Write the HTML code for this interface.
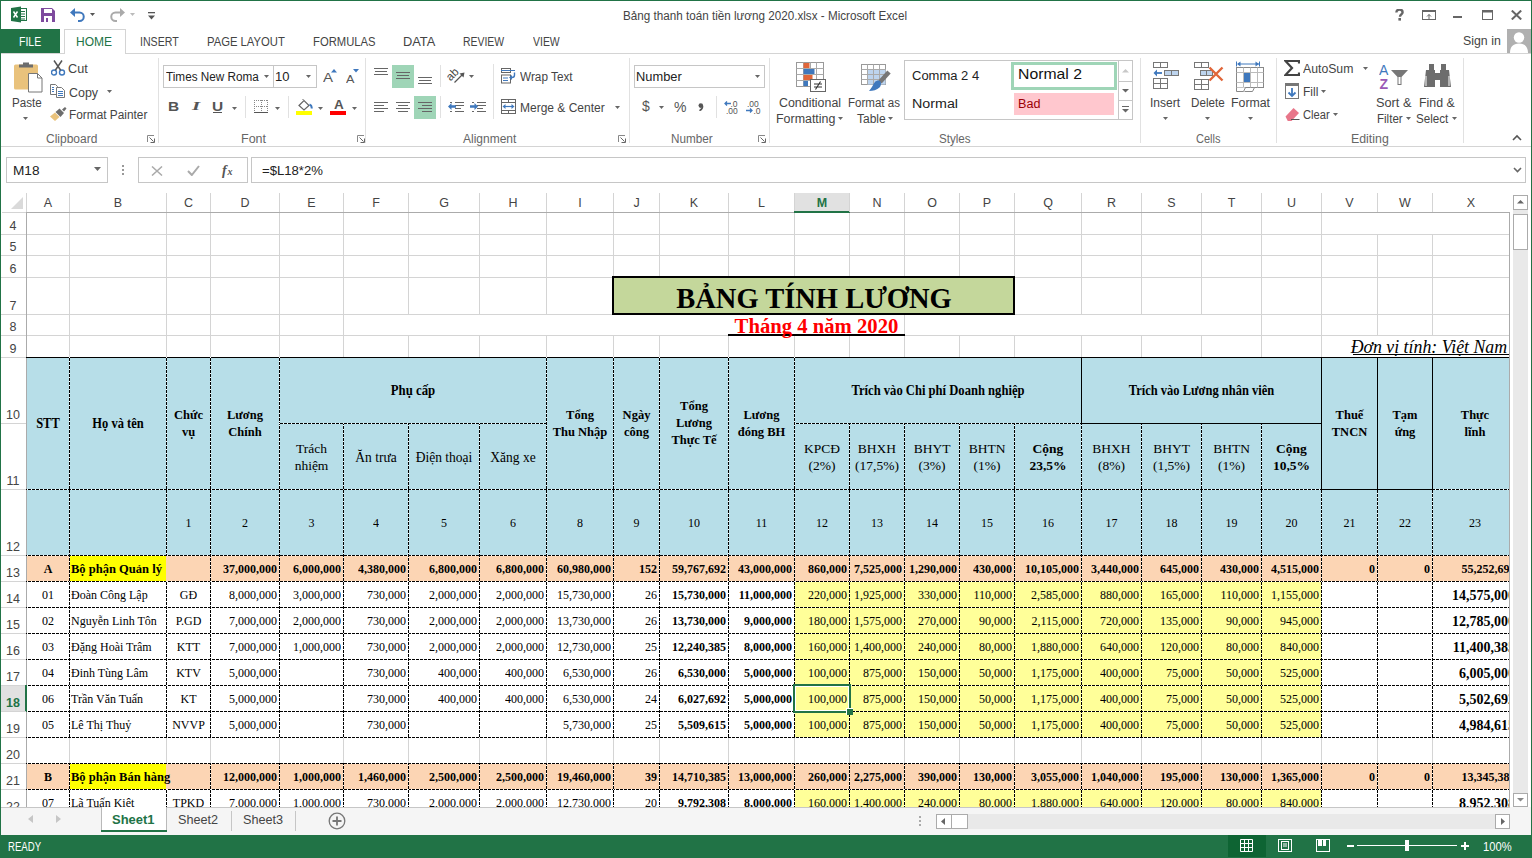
<!DOCTYPE html><html><head><meta charset="utf-8"><style>
*{margin:0;padding:0;box-sizing:border-box}
html,body{width:1532px;height:858px;overflow:hidden;background:#fff;font-family:"Liberation Sans",sans-serif}
.a{position:absolute}
.ui{font-family:"Liberation Sans",sans-serif;color:#444;white-space:nowrap}
.c{position:absolute;font-family:"Liberation Serif",serif;font-size:12px;color:#000;white-space:nowrap;display:flex;align-items:center;overflow:hidden;line-height:17px;padding-top:2px}
.cc{justify-content:center;text-align:center}
.cr{justify-content:flex-end;padding-right:2px}
.cl{justify-content:flex-start;padding-left:1px}
.b{font-weight:bold}
.sy{display:inline-block;line-height:15.45px;transform:scaleY(1.1);transform-origin:50% 50%}
</style></head><body>
<div class="a" style="left:0px;top:0px;width:1532px;height:1px;background:#217346"></div><div class="a" style="left:0px;top:0px;width:1px;height:858px;background:#217346"></div><div class="a" style="left:1531px;top:0px;width:1px;height:858px;background:#217346"></div><div class="a" style="left:623.03px;top:6px;font-family:&quot;Liberation Sans&quot;;font-size:12px;font-weight:normal;font-style:normal;line-height:20px;white-space:nowrap;color:#444;transform:scaleX(0.9725);transform-origin:0 0;">Bảng thanh toán tiền lương 2020.xlsx - Microsoft Excel</div><svg class="a" style="left:10px;top:6px;" width="18" height="17" viewBox="0 0 18 17"><rect x="8.5" y="2.5" width="8" height="12" fill="#fff" stroke="#217346"/><path d="M10 5.5h5M10 8h5M10 10.5h5M10 13h5" stroke="#217346"/><polygon points="1,2 11,0.5 11,16.5 1,15" fill="#217346"/><path d="M3.5 5.5l4 6M7.5 5.5l-4 6" stroke="#fff" stroke-width="1.5"/></svg><svg class="a" style="left:41px;top:8px;" width="14" height="14" viewBox="0 0 14 14"><path d="M0 0h11l3 3v11h-14z" fill="#7e4a9e"/><rect x="3" y="1" width="8" height="4" fill="#fff"/><rect x="3" y="8" width="8" height="6" fill="#fff"/><rect x="5" y="10" width="2" height="4" fill="#7e4a9e"/></svg><svg class="a" style="left:70px;top:7px;" width="15" height="15" viewBox="0 0 15 15"><path d="M4 5.5h5.5a4.25 4.25 0 0 1 0 8.5H8" fill="none" stroke="#3f78bd" stroke-width="2"/><polygon points="0,5.5 5,1 5,10" fill="#3f78bd"/></svg><svg class="a" style="left:90px;top:13px;" width="5" height="3" viewBox="0 0 5 3"><polygon points="0,0 5,0 2.5,3.0" fill="#555"/></svg><svg class="a" style="left:110px;top:7px;" width="15" height="15" viewBox="0 0 15 15"><path d="M11 5.5H5.5a4.25 4.25 0 0 0 0 8.5H7" fill="none" stroke="#aaa" stroke-width="2"/><polygon points="15,5.5 10,1 10,10" fill="#aaa"/></svg><svg class="a" style="left:130px;top:13px;" width="5" height="3" viewBox="0 0 5 3"><polygon points="0,0 5,0 2.5,3.0" fill="#bbb"/></svg><svg class="a" style="left:148px;top:12px;" width="7" height="9" viewBox="0 0 7 9"><rect x="0" y="0" width="7" height="1.3" fill="#555"/><polygon points="0,3.5 7,3.5 3.5,7.5" fill="#555"/></svg><svg class="a" style="left:1395px;top:9px;" width="9" height="12" viewBox="0 0 9 12"><path d="M1.4 3.6c0-2 1.3-3 3.1-3s3.1 1 3.1 2.7c0 2-2.6 2.3-2.6 4.4" fill="none" stroke="#666" stroke-width="2.4"/><rect x="3.4" y="9" width="2.6" height="2.6" fill="#666"/></svg><svg class="a" style="left:1422px;top:10px;" width="14" height="10" viewBox="0 0 14 10"><rect x="0.5" y="0.5" width="13" height="9" fill="none" stroke="#666"/><path d="M0.5 1.5h13" stroke="#666"/><path d="M7 9V4.5M5 6.5l2-2 2 2" stroke="#666" fill="none"/></svg><div class="a" style="left:1453px;top:16px;width:9px;height:2px;background:#666"></div><svg class="a" style="left:1482px;top:10px;" width="11" height="10" viewBox="0 0 11 10"><rect x="0.5" y="0.5" width="10" height="9" fill="none" stroke="#666"/><rect x="0.5" y="0.5" width="10" height="2" fill="#666"/></svg><svg class="a" style="left:1511px;top:10px;" width="11" height="10" viewBox="0 0 11 10"><path d="M0.8 0.6l9.4 8.8M10.2 0.6l-9.4 8.8" stroke="#666" stroke-width="2.1"/></svg><div class="a" style="left:1px;top:29px;width:59px;height:25px;background:#217346"></div><div class="a" style="left:19.12px;top:32px;font-family:&quot;Liberation Sans&quot;;font-size:12px;font-weight:normal;font-style:normal;line-height:20px;white-space:nowrap;color:#fff;transform:scaleX(0.8750);transform-origin:0 0;">FILE</div><div class="a" style="left:64px;top:29px;width:62px;height:25px;background:#fff;border:1px solid #d4d4d4;border-bottom:none"></div><div class="a" style="left:76.00px;top:32px;font-family:&quot;Liberation Sans&quot;;font-size:12px;font-weight:normal;font-style:normal;line-height:20px;white-space:nowrap;color:#217346;">HOME</div><div class="a" style="left:140.12px;top:32px;font-family:&quot;Liberation Sans&quot;;font-size:12px;font-weight:normal;font-style:normal;line-height:20px;white-space:nowrap;color:#444;transform:scaleX(0.8837);transform-origin:0 0;">INSERT</div><div class="a" style="left:207.06px;top:32px;font-family:&quot;Liberation Sans&quot;;font-size:12px;font-weight:normal;font-style:normal;line-height:20px;white-space:nowrap;color:#444;transform:scaleX(0.9390);transform-origin:0 0;">PAGE LAYOUT</div><div class="a" style="left:313.06px;top:32px;font-family:&quot;Liberation Sans&quot;;font-size:12px;font-weight:normal;font-style:normal;line-height:20px;white-space:nowrap;color:#444;transform:scaleX(0.9385);transform-origin:0 0;">FORMULAS</div><div class="a" style="left:402.93px;top:32px;font-family:&quot;Liberation Sans&quot;;font-size:12px;font-weight:normal;font-style:normal;line-height:20px;white-space:nowrap;color:#444;transform:scaleX(1.0690);transform-origin:0 0;">DATA</div><div class="a" style="left:463.13px;top:32px;font-family:&quot;Liberation Sans&quot;;font-size:12px;font-weight:normal;font-style:normal;line-height:20px;white-space:nowrap;color:#444;transform:scaleX(0.8696);transform-origin:0 0;">REVIEW</div><div class="a" style="left:533.00px;top:32px;font-family:&quot;Liberation Sans&quot;;font-size:12px;font-weight:normal;font-style:normal;line-height:20px;white-space:nowrap;color:#444;transform:scaleX(0.8710);transform-origin:0 0;">VIEW</div><div class="a" style="left:1462.97px;top:31px;font-family:&quot;Liberation Sans&quot;;font-size:12px;font-weight:normal;font-style:normal;line-height:20px;white-space:nowrap;color:#444;transform:scaleX(1.0286);transform-origin:0 0;">Sign in</div><svg class="a" style="left:1507px;top:29px;" width="24" height="24" viewBox="0 0 24 24"><rect width="24" height="24" fill="#b0b0b0"/><circle cx="12" cy="8.5" r="5.2" fill="#fff"/><path d="M3 24c0-6 3-9.5 9-9.5s9 3.5 9 9.5z" fill="#fff"/></svg><div class="a" style="left:1px;top:53px;width:1530px;height:1px;background:#d4d4d4"></div><div class="a" style="left:65px;top:53px;width:60px;height:1px;background:#fff"></div><div class="a" style="left:1px;top:146px;width:1530px;height:1px;background:#d4d4d4"></div><div class="a" style="left:158px;top:58px;width:1px;height:85px;background:#e1e1e1"></div><div class="a" style="left:365px;top:58px;width:1px;height:85px;background:#e1e1e1"></div><div class="a" style="left:629px;top:58px;width:1px;height:85px;background:#e1e1e1"></div><div class="a" style="left:769px;top:58px;width:1px;height:85px;background:#e1e1e1"></div><div class="a" style="left:1140px;top:58px;width:1px;height:85px;background:#e1e1e1"></div><div class="a" style="left:1276px;top:58px;width:1px;height:85px;background:#e1e1e1"></div><div class="a" style="left:1463px;top:58px;width:1px;height:85px;background:#e1e1e1"></div><div class="a" style="left:46.00px;top:129px;font-family:&quot;Liberation Sans&quot;;font-size:12px;font-weight:normal;font-style:normal;line-height:20px;white-space:nowrap;color:#666;">Clipboard</div><div class="a" style="left:240.96px;top:129px;font-family:&quot;Liberation Sans&quot;;font-size:12px;font-weight:normal;font-style:normal;line-height:20px;white-space:nowrap;color:#666;transform:scaleX(1.0435);transform-origin:0 0;">Font</div><div class="a" style="left:463.00px;top:129px;font-family:&quot;Liberation Sans&quot;;font-size:12px;font-weight:normal;font-style:normal;line-height:20px;white-space:nowrap;color:#666;">Alignment</div><div class="a" style="left:671.02px;top:129px;font-family:&quot;Liberation Sans&quot;;font-size:12px;font-weight:normal;font-style:normal;line-height:20px;white-space:nowrap;color:#666;transform:scaleX(0.9762);transform-origin:0 0;">Number</div><div class="a" style="left:939.03px;top:129px;font-family:&quot;Liberation Sans&quot;;font-size:12px;font-weight:normal;font-style:normal;line-height:20px;white-space:nowrap;color:#666;transform:scaleX(0.9677);transform-origin:0 0;">Styles</div><div class="a" style="left:1196.08px;top:129px;font-family:&quot;Liberation Sans&quot;;font-size:12px;font-weight:normal;font-style:normal;line-height:20px;white-space:nowrap;color:#666;transform:scaleX(0.9200);transform-origin:0 0;">Cells</div><div class="a" style="left:1350.97px;top:129px;font-family:&quot;Liberation Sans&quot;;font-size:12px;font-weight:normal;font-style:normal;line-height:20px;white-space:nowrap;color:#666;transform:scaleX(1.0286);transform-origin:0 0;">Editing</div><svg class="a" style="left:147px;top:135px;" width="8" height="8" viewBox="0 0 8 8"><path d="M0.5 7V0.5H7" stroke="#888" fill="none"/><path d="M2.5 2.5l4 4M7.5 3.5v4h-4" stroke="#666" fill="none"/></svg><svg class="a" style="left:357px;top:135px;" width="8" height="8" viewBox="0 0 8 8"><path d="M0.5 7V0.5H7" stroke="#888" fill="none"/><path d="M2.5 2.5l4 4M7.5 3.5v4h-4" stroke="#666" fill="none"/></svg><svg class="a" style="left:618px;top:135px;" width="8" height="8" viewBox="0 0 8 8"><path d="M0.5 7V0.5H7" stroke="#888" fill="none"/><path d="M2.5 2.5l4 4M7.5 3.5v4h-4" stroke="#666" fill="none"/></svg><svg class="a" style="left:758px;top:135px;" width="8" height="8" viewBox="0 0 8 8"><path d="M0.5 7V0.5H7" stroke="#888" fill="none"/><path d="M2.5 2.5l4 4M7.5 3.5v4h-4" stroke="#666" fill="none"/></svg><svg class="a" style="left:1512px;top:134px;" width="10" height="7" viewBox="0 0 10 7"><path d="M1 6l4-4 4 4" stroke="#555" stroke-width="1.6" fill="none"/></svg><svg class="a" style="left:13px;top:61px;" width="31" height="32" viewBox="0 0 31 32"><rect x="1" y="3.5" width="24" height="25" rx="1.5" fill="#e9c27c"/><path d="M6 6.5h14v-3h-4v-2h-6v2H6z" fill="#6d6d6d"/><path d="M15.5 12.5h9l4.5 4.5v14h-13.5z" fill="#fff" stroke="#777"/><path d="M24.5 12.5v4.5H29" fill="none" stroke="#777"/></svg><div class="a" style="left:12.03px;top:93px;font-family:&quot;Liberation Sans&quot;;font-size:12px;font-weight:normal;font-style:normal;line-height:20px;white-space:nowrap;color:#444;transform:scaleX(0.9655);transform-origin:0 0;">Paste</div><svg class="a" style="left:23px;top:117px;" width="5" height="3" viewBox="0 0 5 3"><polygon points="0,0 5,0 2.5,3.0" fill="#666"/></svg><svg class="a" style="left:51px;top:60px;" width="15" height="16" viewBox="0 0 15 16"><circle cx="3" cy="12.5" r="2.5" fill="none" stroke="#3f78bd" stroke-width="1.4"/><circle cx="11" cy="12.5" r="2.5" fill="none" stroke="#3f78bd" stroke-width="1.4"/><path d="M4.3 10.2L11 0.5M9.7 10.2L3 0.5" stroke="#555" stroke-width="1.5"/></svg><div class="a" style="left:67.94px;top:59px;font-family:&quot;Liberation Sans&quot;;font-size:12px;font-weight:normal;font-style:normal;line-height:20px;white-space:nowrap;color:#444;transform:scaleX(1.0556);transform-origin:0 0;">Cut</div><svg class="a" style="left:50px;top:84px;" width="16" height="14" viewBox="0 0 16 14"><path d="M0.5 0.5h5l2 2v8h-7z" fill="#fff" stroke="#777"/><path d="M2 3.5h2M2 5.5h2M2 7.5h2" stroke="#3f78bd"/><path d="M6.5 3.5h5l3 3v7h-8z" fill="#fff" stroke="#777"/><path d="M8 7.5h5M8 9.5h5M8 11.5h5" stroke="#3f78bd"/></svg><div class="a" style="left:68.96px;top:83px;font-family:&quot;Liberation Sans&quot;;font-size:12px;font-weight:normal;font-style:normal;line-height:20px;white-space:nowrap;color:#444;transform:scaleX(1.0370);transform-origin:0 0;">Copy</div><svg class="a" style="left:107px;top:90px;" width="5" height="3" viewBox="0 0 5 3"><polygon points="0,0 5,0 2.5,3.0" fill="#666"/></svg><svg class="a" style="left:50px;top:107px;" width="17" height="14" viewBox="0 0 17 14"><path d="M0 9.5l5-4 4.5 4.5-4.5 4z" fill="#e9c27c"/><path d="M5.5 5l4-3.5 4.5 4.5-3.5 4z" fill="#6d6d6d"/><path d="M12 2.5l3-2.5 1.5 1.5-2.5 3z" fill="#6d6d6d"/></svg><div class="a" style="left:69.01px;top:105px;font-family:&quot;Liberation Sans&quot;;font-size:12px;font-weight:normal;font-style:normal;line-height:20px;white-space:nowrap;color:#444;transform:scaleX(0.9872);transform-origin:0 0;">Format Painter</div><div class="a" style="left:163px;top:65px;width:111px;height:23px;border:1px solid #c6c6c6;background:#fff"></div><div class="a" style="left:166.00px;top:67px;font-family:&quot;Liberation Sans&quot;;font-size:12px;font-weight:normal;font-style:normal;line-height:20px;white-space:nowrap;color:#222;transform:scaleX(0.9789);transform-origin:0 0;">Times New Roma</div><svg class="a" style="left:264px;top:75px;" width="5" height="3" viewBox="0 0 5 3"><polygon points="0,0 5,0 2.5,3.0" fill="#666"/></svg><div class="a" style="left:273px;top:65px;width:44px;height:23px;border:1px solid #c6c6c6;background:#fff"></div><div class="a" style="left:274.92px;top:67px;font-family:&quot;Liberation Sans&quot;;font-size:12px;font-weight:normal;font-style:normal;line-height:20px;white-space:nowrap;color:#222;transform:scaleX(1.0833);transform-origin:0 0;">10</div><svg class="a" style="left:306px;top:75px;" width="5" height="3" viewBox="0 0 5 3"><polygon points="0,0 5,0 2.5,3.0" fill="#666"/></svg><div class="a" style="left:323.00px;top:68px;font-family:&quot;Liberation Sans&quot;;font-size:13.5px;font-weight:normal;font-style:normal;line-height:20px;white-space:nowrap;color:#555;transform:scaleX(1.1111);transform-origin:0 0;">A</div><svg class="a" style="left:331px;top:69px;" width="6" height="4" viewBox="0 0 6 4"><polygon points="0,3.5 6,3.5 3,0" fill="#3f78bd"/></svg><div class="a" style="left:346.00px;top:69px;font-family:&quot;Liberation Sans&quot;;font-size:11px;font-weight:normal;font-style:normal;line-height:20px;white-space:nowrap;color:#555;transform:scaleX(1.1429);transform-origin:0 0;">A</div><svg class="a" style="left:353px;top:69px;" width="6" height="4" viewBox="0 0 6 4"><polygon points="0,0 6,0 3,3.5" fill="#3f78bd"/></svg><div class="a" style="left:167.71px;top:97px;font-family:&quot;Liberation Sans&quot;;font-size:12px;font-weight:bold;font-style:normal;line-height:20px;white-space:nowrap;color:#555;transform:scaleX(1.2857);transform-origin:0 0;">B</div><div class="a" style="left:192.00px;top:96px;font-family:&quot;Liberation Serif&quot;;font-size:13px;font-weight:bold;font-style:italic;line-height:20px;white-space:nowrap;color:#555;transform:scaleX(1.6000);transform-origin:0 0;">I</div><div class="a" style="left:211.71px;top:97px;font-family:&quot;Liberation Sans&quot;;font-size:12px;font-weight:bold;font-style:normal;line-height:20px;white-space:nowrap;color:#555;transform:scaleX(1.2857);transform-origin:0 0;">U</div><div class="a" style="left:213px;top:112px;width:9px;height:1px;background:#555"></div><svg class="a" style="left:232px;top:107px;" width="5" height="3" viewBox="0 0 5 3"><polygon points="0,0 5,0 2.5,3.0" fill="#666"/></svg><div class="a" style="left:245px;top:96px;width:1px;height:22px;background:#e1e1e1"></div><svg class="a" style="left:254px;top:100px;" width="14" height="13" viewBox="0 0 14 13"><path d="M0 0.5h14M0 6.5h14M0.5 0v12M7.5 0v12M13.5 0v12" stroke="#888" stroke-dasharray="1 1" fill="none"/><path d="M0 12.5h14" stroke="#555"/></svg><svg class="a" style="left:275px;top:107px;" width="5" height="3" viewBox="0 0 5 3"><polygon points="0,0 5,0 2.5,3.0" fill="#666"/></svg><div class="a" style="left:288px;top:96px;width:1px;height:22px;background:#e1e1e1"></div><svg class="a" style="left:297px;top:99px;" width="16" height="12" viewBox="0 0 16 12"><path d="M2 6.5l5-5 5 5-5 4.5z" fill="#fff" stroke="#666" stroke-width="1.2"/><path d="M6 1V0" stroke="#666"/><path d="M12.5 5.5c1.5 0.5 2.5 2 2 4" stroke="#3f78bd" stroke-width="2" fill="none"/></svg><div class="a" style="left:296px;top:111px;width:16px;height:4px;background:#ffff00"></div><svg class="a" style="left:318px;top:107px;" width="5" height="3" viewBox="0 0 5 3"><polygon points="0,0 5,0 2.5,3.0" fill="#666"/></svg><div class="a" style="left:334.00px;top:95px;font-family:&quot;Liberation Sans&quot;;font-size:13.5px;font-weight:bold;font-style:normal;line-height:20px;white-space:nowrap;color:#555;">A</div><div class="a" style="left:330px;top:111px;width:16px;height:4px;background:#ff0000"></div><svg class="a" style="left:352px;top:107px;" width="5" height="3" viewBox="0 0 5 3"><polygon points="0,0 5,0 2.5,3.0" fill="#666"/></svg><div class="a" style="left:374px;top:68px;width:14px;height:1px;background:#666"></div><div class="a" style="left:375px;top:71px;width:12px;height:1px;background:#666"></div><div class="a" style="left:374px;top:74px;width:14px;height:1px;background:#666"></div><div class="a" style="left:392px;top:65px;width:22px;height:23px;background:#9fd5b7"></div><div class="a" style="left:396px;top:72px;width:14px;height:1px;background:#666"></div><div class="a" style="left:397px;top:75px;width:12px;height:1px;background:#666"></div><div class="a" style="left:396px;top:78px;width:14px;height:1px;background:#666"></div><div class="a" style="left:418px;top:77px;width:14px;height:1px;background:#666"></div><div class="a" style="left:419px;top:80px;width:12px;height:1px;background:#666"></div><div class="a" style="left:418px;top:83px;width:14px;height:1px;background:#666"></div><div class="a" style="left:440px;top:65px;width:1px;height:22px;background:#e1e1e1"></div><svg class="a" style="left:447px;top:66px;" width="20" height="18" viewBox="0 0 20 18"><text x="3.5" y="15.5" transform="rotate(-45 3.5 15.5)" font-family="Liberation Sans" font-size="11.5" fill="#444">ab</text><path d="M7.5 16.5L16 8" stroke="#555" fill="none" stroke-width="1.2"/><polygon points="17.5,6.5 12.5,7.5 16.5,11.5" fill="#555"/></svg><svg class="a" style="left:469px;top:75px;" width="5" height="3" viewBox="0 0 5 3"><polygon points="0,0 5,0 2.5,3.0" fill="#666"/></svg><div class="a" style="left:374px;top:102px;width:14px;height:1px;background:#666"></div><div class="a" style="left:374px;top:105px;width:10px;height:1px;background:#666"></div><div class="a" style="left:374px;top:108px;width:14px;height:1px;background:#666"></div><div class="a" style="left:374px;top:111px;width:10px;height:1px;background:#666"></div><div class="a" style="left:396px;top:102px;width:14px;height:1px;background:#666"></div><div class="a" style="left:398px;top:105px;width:10px;height:1px;background:#666"></div><div class="a" style="left:396px;top:108px;width:14px;height:1px;background:#666"></div><div class="a" style="left:398px;top:111px;width:10px;height:1px;background:#666"></div><div class="a" style="left:414px;top:96px;width:22px;height:23px;background:#9fd5b7"></div><div class="a" style="left:418px;top:102px;width:14px;height:1px;background:#666"></div><div class="a" style="left:422px;top:105px;width:10px;height:1px;background:#666"></div><div class="a" style="left:418px;top:108px;width:14px;height:1px;background:#666"></div><div class="a" style="left:422px;top:111px;width:10px;height:1px;background:#666"></div><div class="a" style="left:440px;top:96px;width:1px;height:22px;background:#e1e1e1"></div><div class="a" style="left:450px;top:102px;width:2px;height:1px;background:#666"></div><div class="a" style="left:450px;top:111px;width:2px;height:1px;background:#666"></div><div class="a" style="left:455px;top:102px;width:9px;height:1px;background:#666"></div><div class="a" style="left:455px;top:105px;width:9px;height:1px;background:#666"></div><div class="a" style="left:455px;top:108px;width:6px;height:1px;background:#666"></div><div class="a" style="left:455px;top:111px;width:9px;height:1px;background:#666"></div><svg class="a" style="left:448px;top:103px;" width="8" height="7" viewBox="0 0 8 7"><polygon points="0,3.5 3.5,0 3.5,2.3 8,2.3 8,4.7 3.5,4.7 3.5,7" fill="#3f78bd"/></svg><div class="a" style="left:472px;top:102px;width:2px;height:1px;background:#666"></div><div class="a" style="left:472px;top:111px;width:2px;height:1px;background:#666"></div><div class="a" style="left:477px;top:102px;width:9px;height:1px;background:#666"></div><div class="a" style="left:477px;top:105px;width:9px;height:1px;background:#666"></div><div class="a" style="left:477px;top:108px;width:6px;height:1px;background:#666"></div><div class="a" style="left:477px;top:111px;width:9px;height:1px;background:#666"></div><svg class="a" style="left:470px;top:103px;" width="8" height="7" viewBox="0 0 8 7"><polygon points="8,3.5 4.5,0 4.5,2.3 0,2.3 0,4.7 4.5,4.7 4.5,7" fill="#3f78bd"/></svg><div class="a" style="left:493px;top:64px;width:1px;height:55px;background:#e1e1e1"></div><svg class="a" style="left:501px;top:68px;" width="16" height="16" viewBox="0 0 16 16"><rect x="0.5" y="0.5" width="9" height="4" fill="#fff" stroke="#666"/><path d="M0 2.5h14" stroke="#3f78bd"/><rect x="0.5" y="7" width="9" height="8" fill="#fff" stroke="#666"/><path d="M2 10h5M2 12.5h5" stroke="#3f78bd"/><path d="M13.5 4.5v2.5a2.5 2.5 0 0 1-2.5 2.5H9" stroke="#3f78bd" stroke-width="1.4" fill="none"/><polygon points="8,9.5 11,7 11,12" fill="#3f78bd"/></svg><div class="a" style="left:520.00px;top:67px;font-family:&quot;Liberation Sans&quot;;font-size:12px;font-weight:normal;font-style:normal;line-height:20px;white-space:nowrap;color:#444;transform:scaleX(0.9815);transform-origin:0 0;">Wrap Text</div><svg class="a" style="left:501px;top:99px;" width="15" height="15" viewBox="0 0 15 15"><rect x="0.5" y="0.5" width="14" height="14" fill="#fff" stroke="#666"/><path d="M0.5 3.5h14M0.5 11.5h14M7.5 0.5v3M7.5 11.5v3" stroke="#666"/><path d="M3 7.5h9" stroke="#3f78bd" stroke-width="1.2"/><polygon points="1.5,7.5 4.5,5 4.5,10" fill="#3f78bd"/><polygon points="13.5,7.5 10.5,5 10.5,10" fill="#3f78bd"/></svg><div class="a" style="left:520.00px;top:98px;font-family:&quot;Liberation Sans&quot;;font-size:12px;font-weight:normal;font-style:normal;line-height:20px;white-space:nowrap;color:#444;">Merge &amp; Center</div><svg class="a" style="left:615px;top:106px;" width="5" height="3" viewBox="0 0 5 3"><polygon points="0,0 5,0 2.5,3.0" fill="#666"/></svg><div class="a" style="left:634px;top:65px;width:131px;height:23px;border:1px solid #c6c6c6;background:#fff"></div><div class="a" style="left:635.93px;top:67px;font-family:&quot;Liberation Sans&quot;;font-size:12px;font-weight:normal;font-style:normal;line-height:20px;white-space:nowrap;color:#222;transform:scaleX(1.0714);transform-origin:0 0;">Number</div><svg class="a" style="left:755px;top:75px;" width="5" height="3" viewBox="0 0 5 3"><polygon points="0,0 5,0 2.5,3.0" fill="#666"/></svg><div class="a" style="left:642.00px;top:96px;font-family:&quot;Liberation Sans&quot;;font-size:14px;font-weight:normal;font-style:normal;line-height:20px;white-space:nowrap;color:#555;">$</div><svg class="a" style="left:659px;top:106px;" width="5" height="3" viewBox="0 0 5 3"><polygon points="0,0 5,0 2.5,3.0" fill="#666"/></svg><div class="a" style="left:674.00px;top:97px;font-family:&quot;Liberation Sans&quot;;font-size:14px;font-weight:normal;font-style:normal;line-height:20px;white-space:nowrap;color:#555;">%</div><svg class="a" style="left:697px;top:103px;" width="7" height="8" viewBox="0 0 7 8"><circle cx="3.8" cy="2.6" r="2.3" fill="#555"/><path d="M5.6 3c0 2-1 3.8-3.2 4.6" stroke="#555" stroke-width="1.5" fill="none"/></svg><div class="a" style="left:716px;top:96px;width:1px;height:22px;background:#e1e1e1"></div><svg class="a" style="left:722px;top:100px;" width="18" height="15" viewBox="0 0 18 15"><text x="8.5" y="6.5" font-family="Liberation Sans" font-size="8.5" fill="#555">.0</text><text x="4" y="13.5" font-family="Liberation Sans" font-size="8.5" fill="#555">.00</text><path d="M9 3.5H3M5 1.5l-2 2 2 2" stroke="#3f78bd" stroke-width="1.3" fill="none"/></svg><svg class="a" style="left:745px;top:100px;" width="18" height="15" viewBox="0 0 18 15"><text x="2" y="6.5" font-family="Liberation Sans" font-size="8.5" fill="#555">.00</text><text x="8.5" y="13.5" font-family="Liberation Sans" font-size="8.5" fill="#555">.0</text><path d="M1 10.5h6M5 8.5l2 2-2 2" stroke="#3f78bd" stroke-width="1.3" fill="none"/></svg><svg class="a" style="left:796px;top:62px;" width="30" height="30" viewBox="0 0 30 30"><rect x="0.5" y="0.5" width="27" height="24" fill="#fff" stroke="#999"/><path d="M0.5 6.5h27M0.5 12.5h27M0.5 18.5h27M7.5 0.5v24M14.5 0.5v24M20.5 0.5v24" stroke="#aaa"/><rect x="7.5" y="1" width="6" height="5" fill="#e0663a"/><rect x="7.5" y="7" width="11" height="5" fill="#3f78bd"/><rect x="7.5" y="13" width="9" height="5" fill="#e0663a"/><rect x="7.5" y="19" width="4.5" height="5" fill="#3f78bd"/><rect x="14.5" y="17.5" width="15" height="12" fill="#fff" stroke="#666"/><path d="M18 22h8M18 25h8M24.5 19.5l-5 8" stroke="#333" stroke-width="1.1"/></svg><div class="a" style="left:778.97px;top:93px;font-family:&quot;Liberation Sans&quot;;font-size:12px;font-weight:normal;font-style:normal;line-height:20px;white-space:nowrap;color:#444;transform:scaleX(1.0339);transform-origin:0 0;">Conditional</div><div class="a" style="left:775.96px;top:109px;font-family:&quot;Liberation Sans&quot;;font-size:12px;font-weight:normal;font-style:normal;line-height:20px;white-space:nowrap;color:#444;transform:scaleX(1.0357);transform-origin:0 0;">Formatting</div><svg class="a" style="left:838px;top:117px;" width="5" height="3" viewBox="0 0 5 3"><polygon points="0,0 5,0 2.5,3.0" fill="#666"/></svg><svg class="a" style="left:861px;top:63px;" width="31" height="30" viewBox="0 0 31 30"><rect x="0.5" y="1.5" width="24" height="20" fill="#fff" stroke="#999"/><rect x="6.5" y="6.5" width="18" height="15" fill="#bdd4ee"/><path d="M0.5 6.5h24M0.5 11.5h24M0.5 16.5h24M6.5 1.5v20M12.5 1.5v20M18.5 1.5v20" stroke="#aaa"/><path d="M28 9l-9 10" stroke="#777" stroke-width="4.5"/><path d="M19.5 18.5c-1.5-1.5-4-1-5.5 0.5-2 2-3 6-6 9 4 0 8-1 10.5-3.5 1.5-1.5 2-4.5 1-6z" fill="#3f78bd"/></svg><div class="a" style="left:848.04px;top:93px;font-family:&quot;Liberation Sans&quot;;font-size:12px;font-weight:normal;font-style:normal;line-height:20px;white-space:nowrap;color:#444;transform:scaleX(0.9623);transform-origin:0 0;">Format as</div><div class="a" style="left:857.00px;top:109px;font-family:&quot;Liberation Sans&quot;;font-size:12px;font-weight:normal;font-style:normal;line-height:20px;white-space:nowrap;color:#444;">Table</div><svg class="a" style="left:888px;top:117px;" width="5" height="3" viewBox="0 0 5 3"><polygon points="0,0 5,0 2.5,3.0" fill="#666"/></svg><div class="a" style="left:904px;top:60px;width:229px;height:60px;border:1px solid #c6c6c6;background:#fff"></div><div class="a" style="left:911.92px;top:66px;font-family:&quot;Liberation Sans&quot;;font-size:12px;font-weight:normal;font-style:normal;line-height:20px;white-space:nowrap;color:#222;transform:scaleX(1.0820);transform-origin:0 0;">Comma 2 4</div><div class="a" style="left:1011px;top:62px;width:106px;height:28px;border:3px solid #9fd5b7;background:#fff"></div><div class="a" style="left:1017.95px;top:64px;font-family:&quot;Liberation Sans&quot;;font-size:15px;font-weight:normal;font-style:normal;line-height:20px;white-space:nowrap;color:#111;transform:scaleX(1.0508);transform-origin:0 0;">Normal 2</div><div class="a" style="left:911.81px;top:94px;font-family:&quot;Liberation Sans&quot;;font-size:12px;font-weight:normal;font-style:normal;line-height:20px;white-space:nowrap;color:#222;transform:scaleX(1.1892);transform-origin:0 0;">Normal</div><div class="a" style="left:1014px;top:93px;width:100px;height:22px;background:#ffc7ce"></div><div class="a" style="left:1017.95px;top:94px;font-family:&quot;Liberation Sans&quot;;font-size:12px;font-weight:normal;font-style:normal;line-height:20px;white-space:nowrap;color:#9c0006;transform:scaleX(1.0500);transform-origin:0 0;">Bad</div><div class="a" style="left:1118px;top:60px;width:15px;height:60px;border:1px solid #c6c6c6;background:#fff"></div><div class="a" style="left:1118px;top:81px;width:15px;height:1px;background:#c6c6c6"></div><div class="a" style="left:1118px;top:100px;width:15px;height:1px;background:#c6c6c6"></div><svg class="a" style="left:1122px;top:69px;" width="7" height="4" viewBox="0 0 7 4"><polygon points="0,3.5 7,3.5 3.5,0" fill="#c8c8c8"/></svg><svg class="a" style="left:1122px;top:89px;" width="7" height="4" viewBox="0 0 7 4"><polygon points="0,0 7,0 3.5,3.5" fill="#666"/></svg><svg class="a" style="left:1122px;top:106px;" width="7" height="7" viewBox="0 0 7 7"><rect x="0" y="0" width="7" height="1" fill="#666"/><polygon points="0,3 7,3 3.5,6.5" fill="#666"/></svg><svg class="a" style="left:1153px;top:62px;" width="27" height="28" viewBox="0 0 27 28"><rect x="0.5" y="0.5" width="14" height="5" fill="#fff" stroke="#777"/><path d="M7.5 0.5v5" stroke="#777"/><rect x="0.5" y="16.5" width="14" height="10" fill="#fff" stroke="#777"/><path d="M7.5 16.5v10M0.5 21.5h14" stroke="#777"/><rect x="11.5" y="8.5" width="14" height="5" fill="#bdd4ee" stroke="#777"/><path d="M18.5 8.5v5" stroke="#777"/><path d="M3 11h6" stroke="#3f78bd" stroke-width="1.8"/><polygon points="0.5,11 4,7.5 4,14.5" fill="#3f78bd"/></svg><div class="a" style="left:1150.00px;top:93px;font-family:&quot;Liberation Sans&quot;;font-size:12px;font-weight:normal;font-style:normal;line-height:20px;white-space:nowrap;color:#444;">Insert</div><svg class="a" style="left:1163px;top:117px;" width="5" height="3" viewBox="0 0 5 3"><polygon points="0,0 5,0 2.5,3.0" fill="#666"/></svg><svg class="a" style="left:1194px;top:62px;" width="30" height="28" viewBox="0 0 30 28"><rect x="0.5" y="0.5" width="14" height="5" fill="#fff" stroke="#777"/><path d="M7.5 0.5v5" stroke="#777"/><rect x="0.5" y="17.5" width="14" height="10" fill="#fff" stroke="#777"/><path d="M7.5 17.5v10M0.5 22.5h14" stroke="#777"/><rect x="6.5" y="8.5" width="12" height="5" fill="#bdd4ee" stroke="#777"/><path d="M12.5 8.5v5" stroke="#777"/><path d="M15.5 5.5l13 13M28.5 5.5l-13 13" stroke="#e0663a" stroke-width="2.4"/></svg><div class="a" style="left:1191.03px;top:93px;font-family:&quot;Liberation Sans&quot;;font-size:12px;font-weight:normal;font-style:normal;line-height:20px;white-space:nowrap;color:#444;transform:scaleX(0.9697);transform-origin:0 0;">Delete</div><svg class="a" style="left:1205px;top:117px;" width="5" height="3" viewBox="0 0 5 3"><polygon points="0,0 5,0 2.5,3.0" fill="#666"/></svg><svg class="a" style="left:1236px;top:61px;" width="29" height="31" viewBox="0 0 29 31"><path d="M2 3h21M0.5 0.5v5M23.5 0.5v5" stroke="#3f78bd" fill="none"/><polygon points="1,3 4.5,0.5 4.5,5.5" fill="#3f78bd"/><polygon points="23,3 19.5,0.5 19.5,5.5" fill="#3f78bd"/><rect x="0.5" y="6.5" width="27" height="20" fill="#fff" stroke="#888"/><path d="M0.5 11.5h27M0.5 21.5h27M7.5 6.5v20M14.5 6.5v20M21.5 6.5v20" stroke="#bbb"/><rect x="8" y="12" width="6" height="9" fill="#3f78bd"/><path d="M0.5 26.5v4h7l2-4M8.5 30.5h8l2-4" stroke="#888" fill="#fff"/></svg><div class="a" style="left:1230.97px;top:93px;font-family:&quot;Liberation Sans&quot;;font-size:12px;font-weight:normal;font-style:normal;line-height:20px;white-space:nowrap;color:#444;transform:scaleX(1.0270);transform-origin:0 0;">Format</div><svg class="a" style="left:1248px;top:117px;" width="5" height="3" viewBox="0 0 5 3"><polygon points="0,0 5,0 2.5,3.0" fill="#666"/></svg><svg class="a" style="left:1284px;top:60px;" width="16" height="16" viewBox="0 0 16 16"><path d="M15 3.5V1H1.5l6.5 7-6.5 7H15v-2.5" fill="none" stroke="#444" stroke-width="2.2"/></svg><div class="a" style="left:1303.00px;top:59px;font-family:&quot;Liberation Sans&quot;;font-size:12px;font-weight:normal;font-style:normal;line-height:20px;white-space:nowrap;color:#444;transform:scaleX(1.0204);transform-origin:0 0;">AutoSum</div><svg class="a" style="left:1363px;top:67px;" width="5" height="3" viewBox="0 0 5 3"><polygon points="0,0 5,0 2.5,3.0" fill="#666"/></svg><svg class="a" style="left:1285px;top:83px;" width="15" height="16" viewBox="0 0 15 16"><rect x="0.5" y="0.5" width="13" height="15" fill="#fff" stroke="#777"/><rect x="0" y="0" width="14" height="3" fill="#777"/><path d="M7 5v8M3.5 9.5L7 13l3.5-3.5" stroke="#3f78bd" stroke-width="1.8" fill="none"/></svg><div class="a" style="left:1303.00px;top:82px;font-family:&quot;Liberation Sans&quot;;font-size:12px;font-weight:normal;font-style:normal;line-height:20px;white-space:nowrap;color:#444;">Fill</div><svg class="a" style="left:1321px;top:90px;" width="5" height="3" viewBox="0 0 5 3"><polygon points="0,0 5,0 2.5,3.0" fill="#666"/></svg><svg class="a" style="left:1285px;top:107px;" width="15" height="14" viewBox="0 0 15 14"><path d="M0.5 9.5l8-8.5 5.5 5-8 8.5H3z" fill="#e8768a"/><path d="M6 12.5h8.5" stroke="#555"/></svg><div class="a" style="left:1303.07px;top:105px;font-family:&quot;Liberation Sans&quot;;font-size:12px;font-weight:normal;font-style:normal;line-height:20px;white-space:nowrap;color:#444;transform:scaleX(0.9286);transform-origin:0 0;">Clear</div><svg class="a" style="left:1333px;top:113px;" width="5" height="3" viewBox="0 0 5 3"><polygon points="0,0 5,0 2.5,3.0" fill="#666"/></svg><svg class="a" style="left:1379px;top:63px;" width="30" height="27" viewBox="0 0 30 27"><text x="0" y="11.5" font-family="Liberation Sans" font-size="14" fill="#3f78bd">A</text><text x="0.5" y="26" font-family="Liberation Sans" font-size="14" font-weight="bold" fill="#9b59b6">Z</text><polygon points="12,7 29,7 22.5,14 22.5,22 18.5,22 18.5,14" fill="#777"/><rect x="19.5" y="14" width="2" height="7" fill="#fff"/></svg><div class="a" style="left:1375.94px;top:93px;font-family:&quot;Liberation Sans&quot;;font-size:12px;font-weight:normal;font-style:normal;line-height:20px;white-space:nowrap;color:#444;transform:scaleX(1.0625);transform-origin:0 0;">Sort &amp;</div><div class="a" style="left:1377.04px;top:109px;font-family:&quot;Liberation Sans&quot;;font-size:12px;font-weight:normal;font-style:normal;line-height:20px;white-space:nowrap;color:#444;transform:scaleX(0.9615);transform-origin:0 0;">Filter</div><svg class="a" style="left:1406px;top:117px;" width="5" height="3" viewBox="0 0 5 3"><polygon points="0,0 5,0 2.5,3.0" fill="#666"/></svg><svg class="a" style="left:1424px;top:64px;" width="27" height="24" viewBox="0 0 27 24"><rect x="5" y="0" width="5" height="6" fill="#6d6d6d"/><rect x="17" y="0" width="5" height="6" fill="#6d6d6d"/><path d="M2 6h9v17H0zM16 6h9l2 17H16z" fill="#6d6d6d"/><rect x="10" y="9" width="7" height="7" fill="#6d6d6d"/><path d="M2 12v10M25 12v10" stroke="#fff"/></svg><div class="a" style="left:1418.97px;top:93px;font-family:&quot;Liberation Sans&quot;;font-size:12px;font-weight:normal;font-style:normal;line-height:20px;white-space:nowrap;color:#444;transform:scaleX(1.0294);transform-origin:0 0;">Find &amp;</div><div class="a" style="left:1416.03px;top:109px;font-family:&quot;Liberation Sans&quot;;font-size:12px;font-weight:normal;font-style:normal;line-height:20px;white-space:nowrap;color:#444;transform:scaleX(0.9688);transform-origin:0 0;">Select</div><svg class="a" style="left:1452px;top:117px;" width="5" height="3" viewBox="0 0 5 3"><polygon points="0,0 5,0 2.5,3.0" fill="#666"/></svg><div class="a" style="left:6px;top:157px;width:102px;height:26px;border:1px solid #c6c6c6;background:#fff"></div><div class="a" style="left:12.86px;top:161px;font-family:&quot;Liberation Sans&quot;;font-size:12px;font-weight:normal;font-style:normal;line-height:20px;white-space:nowrap;color:#222;transform:scaleX(1.1364);transform-origin:0 0;">M18</div><svg class="a" style="left:94px;top:167px;" width="7" height="4" viewBox="0 0 7 4"><polygon points="0,0 7,0 3.5,4.0" fill="#666"/></svg><div class="a" style="left:122px;top:165px;width:2px;height:2px;background:#999"></div><div class="a" style="left:122px;top:169px;width:2px;height:2px;background:#999"></div><div class="a" style="left:122px;top:173px;width:2px;height:2px;background:#999"></div><div class="a" style="left:138px;top:157px;width:110px;height:26px;border:1px solid #c6c6c6;background:#fff"></div><svg class="a" style="left:151px;top:166px;" width="12" height="10" viewBox="0 0 12 10"><path d="M1 0.5l10 9M11 0.5l-10 9" stroke="#aaa" stroke-width="1.5"/></svg><svg class="a" style="left:187px;top:165px;" width="13" height="11" viewBox="0 0 13 11"><path d="M1 6l3.8 4L12 1" stroke="#aaa" stroke-width="2" fill="none"/></svg><svg class="a" style="left:221px;top:163px;" width="16" height="15" viewBox="0 0 16 15"><text x="1" y="11.5" font-family="Liberation Serif" font-size="14" font-style="italic" font-weight="bold" fill="#555">f</text><text x="6.5" y="11.5" font-family="Liberation Serif" font-size="10" font-style="italic" font-weight="bold" fill="#555">x</text></svg><div class="a" style="left:251px;top:157px;width:1275px;height:26px;border:1px solid #c6c6c6;background:#fff"></div><div class="a" style="left:261.91px;top:161px;font-family:&quot;Liberation Sans&quot;;font-size:12px;font-weight:normal;font-style:normal;line-height:20px;white-space:nowrap;color:#222;transform:scaleX(1.0926);transform-origin:0 0;">=$L18*2%</div><svg class="a" style="left:1513px;top:167px;" width="9" height="6" viewBox="0 0 9 6"><path d="M1 1l3.5 3.5L8 1" stroke="#666" stroke-width="1.6" fill="none"/></svg><div class="a" style="left:1510px;top:186px;width:21px;height:621px;background:#fff"></div><div class="a" style="left:1513px;top:210px;width:15px;height:597px;background:#e9e9e9"></div><div class="a" style="left:1513px;top:195px;width:15px;height:15px;border:1px solid #ababab;background:#fff"></div><svg class="a" style="left:1517px;top:200px;" width="7" height="4" viewBox="0 0 7 4"><polygon points="0,3.5 7,3.5 3.5,0" fill="#666"/></svg><div class="a" style="left:1513px;top:214px;width:15px;height:36px;border:1px solid #ababab;background:#fff"></div><div class="a" style="left:1513px;top:793px;width:15px;height:14px;border:1px solid #ababab;background:#fff"></div><svg class="a" style="left:1517px;top:798px;" width="7" height="4" viewBox="0 0 7 4"><polygon points="0,0 7,0 3.5,3.5" fill="#888"/></svg><div class="a" style="left:1px;top:807px;width:1530px;height:28px;background:#f5f5f5"></div><div class="a" style="left:1px;top:807px;width:1509px;height:1px;background:#c6c6c6"></div><svg class="a" style="left:28px;top:815px;" width="5" height="8" viewBox="0 0 5 8"><polygon points="5,0 5,8 0,4" fill="#c6c6c6"/></svg><svg class="a" style="left:56px;top:815px;" width="5" height="8" viewBox="0 0 5 8"><polygon points="0,0 0,8 5,4" fill="#c6c6c6"/></svg><div class="a" style="left:101px;top:807px;width:66px;height:25px;background:#fff;border-left:1px solid #b9b9b9;border-right:1px solid #b9b9b9"></div><div class="a" style="left:101px;top:830px;width:66px;height:2px;background:#217346"></div><div class="a" style="left:111.92px;top:810px;font-family:&quot;Liberation Sans&quot;;font-size:12px;font-weight:bold;font-style:normal;line-height:20px;white-space:nowrap;color:#217346;transform:scaleX(1.0789);transform-origin:0 0;">Sheet1</div><div class="a" style="left:177.95px;top:810px;font-family:&quot;Liberation Sans&quot;;font-size:12px;font-weight:normal;font-style:normal;line-height:20px;white-space:nowrap;color:#444;transform:scaleX(1.0541);transform-origin:0 0;">Sheet2</div><div class="a" style="left:231px;top:811px;width:1px;height:20px;background:#c6c6c6"></div><div class="a" style="left:242.95px;top:810px;font-family:&quot;Liberation Sans&quot;;font-size:12px;font-weight:normal;font-style:normal;line-height:20px;white-space:nowrap;color:#444;transform:scaleX(1.0541);transform-origin:0 0;">Sheet3</div><div class="a" style="left:295px;top:811px;width:1px;height:20px;background:#c6c6c6"></div><svg class="a" style="left:328px;top:812px;" width="18" height="18" viewBox="0 0 18 18"><circle cx="9" cy="9" r="7.8" fill="none" stroke="#777" stroke-width="1.3"/><path d="M9 4.5v9M4.5 9h9" stroke="#777" stroke-width="1.8"/></svg><div class="a" style="left:919px;top:816px;width:2px;height:2px;background:#aaa"></div><div class="a" style="left:919px;top:820px;width:2px;height:2px;background:#aaa"></div><div class="a" style="left:919px;top:824px;width:2px;height:2px;background:#aaa"></div><div class="a" style="left:936px;top:814px;width:573px;height:15px;background:#e9e9e9"></div><div class="a" style="left:936px;top:814px;width:16px;height:15px;border:1px solid #ababab;background:#fff"></div><svg class="a" style="left:941px;top:818px;" width="4" height="7" viewBox="0 0 4 7"><polygon points="4,0 4,7 0,3.5" fill="#666"/></svg><div class="a" style="left:951px;top:814px;width:17px;height:15px;border:1px solid #ababab;background:#fff"></div><div class="a" style="left:1495px;top:814px;width:15px;height:15px;border:1px solid #ababab;background:#fff"></div><svg class="a" style="left:1501px;top:818px;" width="4" height="7" viewBox="0 0 4 7"><polygon points="0,0 0,7 4,3.5" fill="#666"/></svg><div class="a" style="left:0px;top:835px;width:1532px;height:23px;background:#217346"></div><div class="a" style="left:8.20px;top:837px;font-family:&quot;Liberation Sans&quot;;font-size:12px;font-weight:normal;font-style:normal;line-height:20px;white-space:nowrap;color:#fff;transform:scaleX(0.8000);transform-origin:0 0;">READY</div><div class="a" style="left:1228px;top:835px;width:38px;height:22px;background:#0e6433"></div><svg class="a" style="left:1240px;top:839px;" width="14" height="13" viewBox="0 0 14 13"><path d="M0.5 0.5h12v12h-12zM0.5 4.5h12M0.5 8.5h12M4.5 0.5v12M8.5 0.5v12" stroke="#fff" fill="none"/></svg><svg class="a" style="left:1278px;top:839px;" width="14" height="13" viewBox="0 0 14 13"><rect x="0.5" y="0.5" width="13" height="12" fill="none" stroke="#fff"/><rect x="3.5" y="2.5" width="7" height="8" fill="none" stroke="#fff"/><path d="M5 5h4M5 7h4" stroke="#fff"/></svg><svg class="a" style="left:1316px;top:839px;" width="14" height="13" viewBox="0 0 14 13"><rect x="0.5" y="0.5" width="13" height="12" fill="none" stroke="#fff"/><rect x="2" y="1" width="4" height="6" fill="#fff"/><rect x="7" y="1" width="3" height="6" fill="#fff"/></svg><div class="a" style="left:1347px;top:845px;width:7px;height:2px;background:#fff"></div><div class="a" style="left:1357px;top:845px;width:100px;height:1px;background:#fff"></div><div class="a" style="left:1405px;top:840px;width:4px;height:11px;background:#fff"></div><div class="a" style="left:1461px;top:845px;width:8px;height:2px;background:#fff"></div><div class="a" style="left:1464px;top:842px;width:2px;height:8px;background:#fff"></div><div class="a" style="left:1483.07px;top:837px;font-family:&quot;Liberation Sans&quot;;font-size:12px;font-weight:normal;font-style:normal;line-height:20px;white-space:nowrap;color:#fff;transform:scaleX(0.9310);transform-origin:0 0;">100%</div>
<div class="a" style="left:0;top:193px;width:1510px;height:614px;overflow:hidden"><div class="a" style="left:0;top:-193px;width:1532px;height:858px">
<div class="a" style="left:26px;top:357px;width:1483px;height:198px;background:#b7dee8"></div><div class="a" style="left:26px;top:555px;width:1483px;height:26px;background:#fcd5b4"></div><div class="a" style="left:70px;top:556px;width:96px;height:25px;background:#ffff00"></div><div class="a" style="left:26px;top:763px;width:1483px;height:26px;background:#fcd5b4"></div><div class="a" style="left:70px;top:764px;width:96px;height:25px;background:#ffff00"></div><div class="a" style="left:794px;top:581px;width:527px;height:26px;background:#ffff99"></div><div class="a" style="left:794px;top:607px;width:527px;height:26px;background:#ffff99"></div><div class="a" style="left:794px;top:633px;width:527px;height:26px;background:#ffff99"></div><div class="a" style="left:794px;top:659px;width:527px;height:26px;background:#ffff99"></div><div class="a" style="left:794px;top:685px;width:527px;height:26px;background:#ffff99"></div><div class="a" style="left:794px;top:711px;width:527px;height:26px;background:#ffff99"></div><div class="a" style="left:794px;top:789px;width:527px;height:26px;background:#ffff99"></div>
<svg class="a" style="left:0;top:0" width="1532" height="858" shape-rendering="crispEdges"><line x1="69.5" y1="212" x2="69.5" y2="235" stroke="#d4d4d4" stroke-width="1"/><line x1="166.5" y1="212" x2="166.5" y2="235" stroke="#d4d4d4" stroke-width="1"/><line x1="210.5" y1="212" x2="210.5" y2="235" stroke="#d4d4d4" stroke-width="1"/><line x1="279.5" y1="212" x2="279.5" y2="235" stroke="#d4d4d4" stroke-width="1"/><line x1="343.5" y1="212" x2="343.5" y2="235" stroke="#d4d4d4" stroke-width="1"/><line x1="408.5" y1="212" x2="408.5" y2="235" stroke="#d4d4d4" stroke-width="1"/><line x1="479.5" y1="212" x2="479.5" y2="235" stroke="#d4d4d4" stroke-width="1"/><line x1="546.5" y1="212" x2="546.5" y2="235" stroke="#d4d4d4" stroke-width="1"/><line x1="613.5" y1="212" x2="613.5" y2="235" stroke="#d4d4d4" stroke-width="1"/><line x1="659.5" y1="212" x2="659.5" y2="235" stroke="#d4d4d4" stroke-width="1"/><line x1="728.5" y1="212" x2="728.5" y2="235" stroke="#d4d4d4" stroke-width="1"/><line x1="794.5" y1="212" x2="794.5" y2="235" stroke="#d4d4d4" stroke-width="1"/><line x1="849.5" y1="212" x2="849.5" y2="235" stroke="#d4d4d4" stroke-width="1"/><line x1="904.5" y1="212" x2="904.5" y2="235" stroke="#d4d4d4" stroke-width="1"/><line x1="959.5" y1="212" x2="959.5" y2="235" stroke="#d4d4d4" stroke-width="1"/><line x1="1014.5" y1="212" x2="1014.5" y2="235" stroke="#d4d4d4" stroke-width="1"/><line x1="1081.5" y1="212" x2="1081.5" y2="235" stroke="#d4d4d4" stroke-width="1"/><line x1="1141.5" y1="212" x2="1141.5" y2="235" stroke="#d4d4d4" stroke-width="1"/><line x1="1201.5" y1="212" x2="1201.5" y2="235" stroke="#d4d4d4" stroke-width="1"/><line x1="1261.5" y1="212" x2="1261.5" y2="235" stroke="#d4d4d4" stroke-width="1"/><line x1="1321.5" y1="212" x2="1321.5" y2="235" stroke="#d4d4d4" stroke-width="1"/><line x1="1509.5" y1="212" x2="1509.5" y2="235" stroke="#d4d4d4" stroke-width="1"/><line x1="69.5" y1="234" x2="69.5" y2="256" stroke="#d4d4d4" stroke-width="1"/><line x1="166.5" y1="234" x2="166.5" y2="256" stroke="#d4d4d4" stroke-width="1"/><line x1="210.5" y1="234" x2="210.5" y2="256" stroke="#d4d4d4" stroke-width="1"/><line x1="279.5" y1="234" x2="279.5" y2="256" stroke="#d4d4d4" stroke-width="1"/><line x1="343.5" y1="234" x2="343.5" y2="256" stroke="#d4d4d4" stroke-width="1"/><line x1="408.5" y1="234" x2="408.5" y2="256" stroke="#d4d4d4" stroke-width="1"/><line x1="479.5" y1="234" x2="479.5" y2="256" stroke="#d4d4d4" stroke-width="1"/><line x1="546.5" y1="234" x2="546.5" y2="256" stroke="#d4d4d4" stroke-width="1"/><line x1="613.5" y1="234" x2="613.5" y2="256" stroke="#d4d4d4" stroke-width="1"/><line x1="659.5" y1="234" x2="659.5" y2="256" stroke="#d4d4d4" stroke-width="1"/><line x1="728.5" y1="234" x2="728.5" y2="256" stroke="#d4d4d4" stroke-width="1"/><line x1="794.5" y1="234" x2="794.5" y2="256" stroke="#d4d4d4" stroke-width="1"/><line x1="849.5" y1="234" x2="849.5" y2="256" stroke="#d4d4d4" stroke-width="1"/><line x1="904.5" y1="234" x2="904.5" y2="256" stroke="#d4d4d4" stroke-width="1"/><line x1="959.5" y1="234" x2="959.5" y2="256" stroke="#d4d4d4" stroke-width="1"/><line x1="1014.5" y1="234" x2="1014.5" y2="256" stroke="#d4d4d4" stroke-width="1"/><line x1="1081.5" y1="234" x2="1081.5" y2="256" stroke="#d4d4d4" stroke-width="1"/><line x1="1141.5" y1="234" x2="1141.5" y2="256" stroke="#d4d4d4" stroke-width="1"/><line x1="1201.5" y1="234" x2="1201.5" y2="256" stroke="#d4d4d4" stroke-width="1"/><line x1="1261.5" y1="234" x2="1261.5" y2="256" stroke="#d4d4d4" stroke-width="1"/><line x1="1321.5" y1="234" x2="1321.5" y2="256" stroke="#d4d4d4" stroke-width="1"/><line x1="1377.5" y1="234" x2="1377.5" y2="256" stroke="#d4d4d4" stroke-width="1"/><line x1="1432.5" y1="234" x2="1432.5" y2="256" stroke="#d4d4d4" stroke-width="1"/><line x1="1509.5" y1="234" x2="1509.5" y2="256" stroke="#d4d4d4" stroke-width="1"/><line x1="69.5" y1="255" x2="69.5" y2="278" stroke="#d4d4d4" stroke-width="1"/><line x1="166.5" y1="255" x2="166.5" y2="278" stroke="#d4d4d4" stroke-width="1"/><line x1="210.5" y1="255" x2="210.5" y2="278" stroke="#d4d4d4" stroke-width="1"/><line x1="279.5" y1="255" x2="279.5" y2="278" stroke="#d4d4d4" stroke-width="1"/><line x1="343.5" y1="255" x2="343.5" y2="278" stroke="#d4d4d4" stroke-width="1"/><line x1="408.5" y1="255" x2="408.5" y2="278" stroke="#d4d4d4" stroke-width="1"/><line x1="479.5" y1="255" x2="479.5" y2="278" stroke="#d4d4d4" stroke-width="1"/><line x1="546.5" y1="255" x2="546.5" y2="278" stroke="#d4d4d4" stroke-width="1"/><line x1="613.5" y1="255" x2="613.5" y2="278" stroke="#d4d4d4" stroke-width="1"/><line x1="659.5" y1="255" x2="659.5" y2="278" stroke="#d4d4d4" stroke-width="1"/><line x1="728.5" y1="255" x2="728.5" y2="278" stroke="#d4d4d4" stroke-width="1"/><line x1="794.5" y1="255" x2="794.5" y2="278" stroke="#d4d4d4" stroke-width="1"/><line x1="849.5" y1="255" x2="849.5" y2="278" stroke="#d4d4d4" stroke-width="1"/><line x1="904.5" y1="255" x2="904.5" y2="278" stroke="#d4d4d4" stroke-width="1"/><line x1="959.5" y1="255" x2="959.5" y2="278" stroke="#d4d4d4" stroke-width="1"/><line x1="1014.5" y1="255" x2="1014.5" y2="278" stroke="#d4d4d4" stroke-width="1"/><line x1="1081.5" y1="255" x2="1081.5" y2="278" stroke="#d4d4d4" stroke-width="1"/><line x1="1141.5" y1="255" x2="1141.5" y2="278" stroke="#d4d4d4" stroke-width="1"/><line x1="1201.5" y1="255" x2="1201.5" y2="278" stroke="#d4d4d4" stroke-width="1"/><line x1="1261.5" y1="255" x2="1261.5" y2="278" stroke="#d4d4d4" stroke-width="1"/><line x1="1321.5" y1="255" x2="1321.5" y2="278" stroke="#d4d4d4" stroke-width="1"/><line x1="1377.5" y1="255" x2="1377.5" y2="278" stroke="#d4d4d4" stroke-width="1"/><line x1="1432.5" y1="255" x2="1432.5" y2="278" stroke="#d4d4d4" stroke-width="1"/><line x1="1509.5" y1="255" x2="1509.5" y2="278" stroke="#d4d4d4" stroke-width="1"/><line x1="69.5" y1="277" x2="69.5" y2="315" stroke="#d4d4d4" stroke-width="1"/><line x1="166.5" y1="277" x2="166.5" y2="315" stroke="#d4d4d4" stroke-width="1"/><line x1="210.5" y1="277" x2="210.5" y2="315" stroke="#d4d4d4" stroke-width="1"/><line x1="279.5" y1="277" x2="279.5" y2="315" stroke="#d4d4d4" stroke-width="1"/><line x1="343.5" y1="277" x2="343.5" y2="315" stroke="#d4d4d4" stroke-width="1"/><line x1="408.5" y1="277" x2="408.5" y2="315" stroke="#d4d4d4" stroke-width="1"/><line x1="479.5" y1="277" x2="479.5" y2="315" stroke="#d4d4d4" stroke-width="1"/><line x1="546.5" y1="277" x2="546.5" y2="315" stroke="#d4d4d4" stroke-width="1"/><line x1="613.5" y1="277" x2="613.5" y2="315" stroke="#d4d4d4" stroke-width="1"/><line x1="1014.5" y1="277" x2="1014.5" y2="315" stroke="#d4d4d4" stroke-width="1"/><line x1="1081.5" y1="277" x2="1081.5" y2="315" stroke="#d4d4d4" stroke-width="1"/><line x1="1141.5" y1="277" x2="1141.5" y2="315" stroke="#d4d4d4" stroke-width="1"/><line x1="1201.5" y1="277" x2="1201.5" y2="315" stroke="#d4d4d4" stroke-width="1"/><line x1="1261.5" y1="277" x2="1261.5" y2="315" stroke="#d4d4d4" stroke-width="1"/><line x1="1321.5" y1="277" x2="1321.5" y2="315" stroke="#d4d4d4" stroke-width="1"/><line x1="1377.5" y1="277" x2="1377.5" y2="315" stroke="#d4d4d4" stroke-width="1"/><line x1="1432.5" y1="277" x2="1432.5" y2="315" stroke="#d4d4d4" stroke-width="1"/><line x1="1509.5" y1="277" x2="1509.5" y2="315" stroke="#d4d4d4" stroke-width="1"/><line x1="69.5" y1="314" x2="69.5" y2="336" stroke="#d4d4d4" stroke-width="1"/><line x1="166.5" y1="314" x2="166.5" y2="336" stroke="#d4d4d4" stroke-width="1"/><line x1="210.5" y1="314" x2="210.5" y2="336" stroke="#d4d4d4" stroke-width="1"/><line x1="279.5" y1="314" x2="279.5" y2="336" stroke="#d4d4d4" stroke-width="1"/><line x1="343.5" y1="314" x2="343.5" y2="336" stroke="#d4d4d4" stroke-width="1"/><line x1="904.5" y1="314" x2="904.5" y2="336" stroke="#d4d4d4" stroke-width="1"/><line x1="1261.5" y1="314" x2="1261.5" y2="336" stroke="#d4d4d4" stroke-width="1"/><line x1="1321.5" y1="314" x2="1321.5" y2="336" stroke="#d4d4d4" stroke-width="1"/><line x1="1377.5" y1="314" x2="1377.5" y2="336" stroke="#d4d4d4" stroke-width="1"/><line x1="1432.5" y1="314" x2="1432.5" y2="336" stroke="#d4d4d4" stroke-width="1"/><line x1="1509.5" y1="314" x2="1509.5" y2="336" stroke="#d4d4d4" stroke-width="1"/><line x1="69.5" y1="335" x2="69.5" y2="358" stroke="#d4d4d4" stroke-width="1"/><line x1="166.5" y1="335" x2="166.5" y2="358" stroke="#d4d4d4" stroke-width="1"/><line x1="210.5" y1="335" x2="210.5" y2="358" stroke="#d4d4d4" stroke-width="1"/><line x1="279.5" y1="335" x2="279.5" y2="358" stroke="#d4d4d4" stroke-width="1"/><line x1="343.5" y1="335" x2="343.5" y2="358" stroke="#d4d4d4" stroke-width="1"/><line x1="408.5" y1="335" x2="408.5" y2="358" stroke="#d4d4d4" stroke-width="1"/><line x1="479.5" y1="335" x2="479.5" y2="358" stroke="#d4d4d4" stroke-width="1"/><line x1="546.5" y1="335" x2="546.5" y2="358" stroke="#d4d4d4" stroke-width="1"/><line x1="613.5" y1="335" x2="613.5" y2="358" stroke="#d4d4d4" stroke-width="1"/><line x1="659.5" y1="335" x2="659.5" y2="358" stroke="#d4d4d4" stroke-width="1"/><line x1="728.5" y1="335" x2="728.5" y2="358" stroke="#d4d4d4" stroke-width="1"/><line x1="794.5" y1="335" x2="794.5" y2="358" stroke="#d4d4d4" stroke-width="1"/><line x1="849.5" y1="335" x2="849.5" y2="358" stroke="#d4d4d4" stroke-width="1"/><line x1="904.5" y1="335" x2="904.5" y2="358" stroke="#d4d4d4" stroke-width="1"/><line x1="959.5" y1="335" x2="959.5" y2="358" stroke="#d4d4d4" stroke-width="1"/><line x1="1014.5" y1="335" x2="1014.5" y2="358" stroke="#d4d4d4" stroke-width="1"/><line x1="1081.5" y1="335" x2="1081.5" y2="358" stroke="#d4d4d4" stroke-width="1"/><line x1="1141.5" y1="335" x2="1141.5" y2="358" stroke="#d4d4d4" stroke-width="1"/><line x1="1201.5" y1="335" x2="1201.5" y2="358" stroke="#d4d4d4" stroke-width="1"/><line x1="1261.5" y1="335" x2="1261.5" y2="358" stroke="#d4d4d4" stroke-width="1"/><line x1="1321.5" y1="335" x2="1321.5" y2="358" stroke="#d4d4d4" stroke-width="1"/><line x1="1509.5" y1="335" x2="1509.5" y2="358" stroke="#d4d4d4" stroke-width="1"/><line x1="26" y1="234.5" x2="1510" y2="234.5" stroke="#d4d4d4" stroke-width="1"/><line x1="26" y1="255.5" x2="1510" y2="255.5" stroke="#d4d4d4" stroke-width="1"/><line x1="26" y1="277.5" x2="1510" y2="277.5" stroke="#d4d4d4" stroke-width="1"/><line x1="26" y1="314.5" x2="1510" y2="314.5" stroke="#d4d4d4" stroke-width="1"/><line x1="26" y1="335.5" x2="1510" y2="335.5" stroke="#d4d4d4" stroke-width="1"/><line x1="69.5" y1="737" x2="69.5" y2="764" stroke="#d4d4d4" stroke-width="1"/><line x1="166.5" y1="737" x2="166.5" y2="764" stroke="#d4d4d4" stroke-width="1"/><line x1="210.5" y1="737" x2="210.5" y2="764" stroke="#d4d4d4" stroke-width="1"/><line x1="279.5" y1="737" x2="279.5" y2="764" stroke="#d4d4d4" stroke-width="1"/><line x1="343.5" y1="737" x2="343.5" y2="764" stroke="#d4d4d4" stroke-width="1"/><line x1="408.5" y1="737" x2="408.5" y2="764" stroke="#d4d4d4" stroke-width="1"/><line x1="479.5" y1="737" x2="479.5" y2="764" stroke="#d4d4d4" stroke-width="1"/><line x1="546.5" y1="737" x2="546.5" y2="764" stroke="#d4d4d4" stroke-width="1"/><line x1="613.5" y1="737" x2="613.5" y2="764" stroke="#d4d4d4" stroke-width="1"/><line x1="659.5" y1="737" x2="659.5" y2="764" stroke="#d4d4d4" stroke-width="1"/><line x1="728.5" y1="737" x2="728.5" y2="764" stroke="#d4d4d4" stroke-width="1"/><line x1="794.5" y1="737" x2="794.5" y2="764" stroke="#d4d4d4" stroke-width="1"/><line x1="849.5" y1="737" x2="849.5" y2="764" stroke="#d4d4d4" stroke-width="1"/><line x1="904.5" y1="737" x2="904.5" y2="764" stroke="#d4d4d4" stroke-width="1"/><line x1="959.5" y1="737" x2="959.5" y2="764" stroke="#d4d4d4" stroke-width="1"/><line x1="1014.5" y1="737" x2="1014.5" y2="764" stroke="#d4d4d4" stroke-width="1"/><line x1="1081.5" y1="737" x2="1081.5" y2="764" stroke="#d4d4d4" stroke-width="1"/><line x1="1141.5" y1="737" x2="1141.5" y2="764" stroke="#d4d4d4" stroke-width="1"/><line x1="1201.5" y1="737" x2="1201.5" y2="764" stroke="#d4d4d4" stroke-width="1"/><line x1="1261.5" y1="737" x2="1261.5" y2="764" stroke="#d4d4d4" stroke-width="1"/><line x1="1321.5" y1="737" x2="1321.5" y2="764" stroke="#d4d4d4" stroke-width="1"/><line x1="1377.5" y1="737" x2="1377.5" y2="764" stroke="#d4d4d4" stroke-width="1"/><line x1="1432.5" y1="737" x2="1432.5" y2="764" stroke="#d4d4d4" stroke-width="1"/><line x1="1509.5" y1="737" x2="1509.5" y2="764" stroke="#d4d4d4" stroke-width="1"/><line x1="26.5" y1="212" x2="26.5" y2="807" stroke="#ababab" stroke-width="1"/><line x1="1509.5" y1="212" x2="1509.5" y2="807" stroke="#ababab" stroke-width="1"/><line x1="26" y1="212.5" x2="1510" y2="212.5" stroke="#ababab" stroke-width="1"/><line x1="26" y1="357.5" x2="1510" y2="357.5" stroke="#000" stroke-width="1"/><line x1="69.5" y1="357" x2="69.5" y2="489" stroke="#fff" stroke-width="1"/><line x1="69.5" y1="357" x2="69.5" y2="489" stroke="#000" stroke-width="1" stroke-dasharray="3 1" stroke-dashoffset="3"/><line x1="69.5" y1="489" x2="69.5" y2="555" stroke="#fff" stroke-width="1"/><line x1="69.5" y1="489" x2="69.5" y2="555" stroke="#000" stroke-width="1" stroke-dasharray="3 1" stroke-dashoffset="3"/><line x1="166.5" y1="357" x2="166.5" y2="489" stroke="#fff" stroke-width="1"/><line x1="166.5" y1="357" x2="166.5" y2="489" stroke="#000" stroke-width="1" stroke-dasharray="3 1" stroke-dashoffset="3"/><line x1="166.5" y1="489" x2="166.5" y2="555" stroke="#fff" stroke-width="1"/><line x1="166.5" y1="489" x2="166.5" y2="555" stroke="#000" stroke-width="1" stroke-dasharray="3 1" stroke-dashoffset="3"/><line x1="210.5" y1="357" x2="210.5" y2="489" stroke="#fff" stroke-width="1"/><line x1="210.5" y1="357" x2="210.5" y2="489" stroke="#000" stroke-width="1" stroke-dasharray="3 1" stroke-dashoffset="3"/><line x1="210.5" y1="489" x2="210.5" y2="555" stroke="#fff" stroke-width="1"/><line x1="210.5" y1="489" x2="210.5" y2="555" stroke="#000" stroke-width="1" stroke-dasharray="3 1" stroke-dashoffset="3"/><line x1="279.5" y1="357" x2="279.5" y2="489" stroke="#fff" stroke-width="1"/><line x1="279.5" y1="357" x2="279.5" y2="489" stroke="#000" stroke-width="1" stroke-dasharray="3 1" stroke-dashoffset="3"/><line x1="279.5" y1="489" x2="279.5" y2="555" stroke="#fff" stroke-width="1"/><line x1="279.5" y1="489" x2="279.5" y2="555" stroke="#000" stroke-width="1" stroke-dasharray="3 1" stroke-dashoffset="3"/><line x1="343.5" y1="423" x2="343.5" y2="489" stroke="#fff" stroke-width="1"/><line x1="343.5" y1="423" x2="343.5" y2="489" stroke="#000" stroke-width="1" stroke-dasharray="3 1" stroke-dashoffset="1"/><line x1="343.5" y1="489" x2="343.5" y2="555" stroke="#fff" stroke-width="1"/><line x1="343.5" y1="489" x2="343.5" y2="555" stroke="#000" stroke-width="1" stroke-dasharray="3 1" stroke-dashoffset="3"/><line x1="408.5" y1="423" x2="408.5" y2="489" stroke="#fff" stroke-width="1"/><line x1="408.5" y1="423" x2="408.5" y2="489" stroke="#000" stroke-width="1" stroke-dasharray="3 1" stroke-dashoffset="1"/><line x1="408.5" y1="489" x2="408.5" y2="555" stroke="#fff" stroke-width="1"/><line x1="408.5" y1="489" x2="408.5" y2="555" stroke="#000" stroke-width="1" stroke-dasharray="3 1" stroke-dashoffset="3"/><line x1="479.5" y1="423" x2="479.5" y2="489" stroke="#fff" stroke-width="1"/><line x1="479.5" y1="423" x2="479.5" y2="489" stroke="#000" stroke-width="1" stroke-dasharray="3 1" stroke-dashoffset="1"/><line x1="479.5" y1="489" x2="479.5" y2="555" stroke="#fff" stroke-width="1"/><line x1="479.5" y1="489" x2="479.5" y2="555" stroke="#000" stroke-width="1" stroke-dasharray="3 1" stroke-dashoffset="3"/><line x1="546.5" y1="357" x2="546.5" y2="489" stroke="#fff" stroke-width="1"/><line x1="546.5" y1="357" x2="546.5" y2="489" stroke="#000" stroke-width="1" stroke-dasharray="3 1" stroke-dashoffset="3"/><line x1="546.5" y1="489" x2="546.5" y2="555" stroke="#fff" stroke-width="1"/><line x1="546.5" y1="489" x2="546.5" y2="555" stroke="#000" stroke-width="1" stroke-dasharray="3 1" stroke-dashoffset="3"/><line x1="613.5" y1="357" x2="613.5" y2="489" stroke="#fff" stroke-width="1"/><line x1="613.5" y1="357" x2="613.5" y2="489" stroke="#000" stroke-width="1" stroke-dasharray="3 1" stroke-dashoffset="3"/><line x1="613.5" y1="489" x2="613.5" y2="555" stroke="#fff" stroke-width="1"/><line x1="613.5" y1="489" x2="613.5" y2="555" stroke="#000" stroke-width="1" stroke-dasharray="3 1" stroke-dashoffset="3"/><line x1="659.5" y1="357" x2="659.5" y2="489" stroke="#fff" stroke-width="1"/><line x1="659.5" y1="357" x2="659.5" y2="489" stroke="#000" stroke-width="1" stroke-dasharray="3 1" stroke-dashoffset="3"/><line x1="659.5" y1="489" x2="659.5" y2="555" stroke="#fff" stroke-width="1"/><line x1="659.5" y1="489" x2="659.5" y2="555" stroke="#000" stroke-width="1" stroke-dasharray="3 1" stroke-dashoffset="3"/><line x1="728.5" y1="357" x2="728.5" y2="489" stroke="#fff" stroke-width="1"/><line x1="728.5" y1="357" x2="728.5" y2="489" stroke="#000" stroke-width="1" stroke-dasharray="3 1" stroke-dashoffset="3"/><line x1="728.5" y1="489" x2="728.5" y2="555" stroke="#fff" stroke-width="1"/><line x1="728.5" y1="489" x2="728.5" y2="555" stroke="#000" stroke-width="1" stroke-dasharray="3 1" stroke-dashoffset="3"/><line x1="794.5" y1="357" x2="794.5" y2="489" stroke="#fff" stroke-width="1"/><line x1="794.5" y1="357" x2="794.5" y2="489" stroke="#000" stroke-width="1" stroke-dasharray="3 1" stroke-dashoffset="3"/><line x1="794.5" y1="489" x2="794.5" y2="555" stroke="#fff" stroke-width="1"/><line x1="794.5" y1="489" x2="794.5" y2="555" stroke="#000" stroke-width="1" stroke-dasharray="3 1" stroke-dashoffset="3"/><line x1="849.5" y1="423" x2="849.5" y2="489" stroke="#fff" stroke-width="1"/><line x1="849.5" y1="423" x2="849.5" y2="489" stroke="#000" stroke-width="1" stroke-dasharray="3 1" stroke-dashoffset="1"/><line x1="849.5" y1="489" x2="849.5" y2="555" stroke="#fff" stroke-width="1"/><line x1="849.5" y1="489" x2="849.5" y2="555" stroke="#000" stroke-width="1" stroke-dasharray="3 1" stroke-dashoffset="3"/><line x1="904.5" y1="423" x2="904.5" y2="489" stroke="#fff" stroke-width="1"/><line x1="904.5" y1="423" x2="904.5" y2="489" stroke="#000" stroke-width="1" stroke-dasharray="3 1" stroke-dashoffset="1"/><line x1="904.5" y1="489" x2="904.5" y2="555" stroke="#fff" stroke-width="1"/><line x1="904.5" y1="489" x2="904.5" y2="555" stroke="#000" stroke-width="1" stroke-dasharray="3 1" stroke-dashoffset="3"/><line x1="959.5" y1="423" x2="959.5" y2="489" stroke="#fff" stroke-width="1"/><line x1="959.5" y1="423" x2="959.5" y2="489" stroke="#000" stroke-width="1" stroke-dasharray="3 1" stroke-dashoffset="1"/><line x1="959.5" y1="489" x2="959.5" y2="555" stroke="#fff" stroke-width="1"/><line x1="959.5" y1="489" x2="959.5" y2="555" stroke="#000" stroke-width="1" stroke-dasharray="3 1" stroke-dashoffset="3"/><line x1="1014.5" y1="423" x2="1014.5" y2="489" stroke="#fff" stroke-width="1"/><line x1="1014.5" y1="423" x2="1014.5" y2="489" stroke="#000" stroke-width="1" stroke-dasharray="3 1" stroke-dashoffset="1"/><line x1="1014.5" y1="489" x2="1014.5" y2="555" stroke="#fff" stroke-width="1"/><line x1="1014.5" y1="489" x2="1014.5" y2="555" stroke="#000" stroke-width="1" stroke-dasharray="3 1" stroke-dashoffset="3"/><line x1="1081.5" y1="357" x2="1081.5" y2="424" stroke="#000" stroke-width="1"/><line x1="1081.5" y1="423" x2="1081.5" y2="489" stroke="#fff" stroke-width="1"/><line x1="1081.5" y1="423" x2="1081.5" y2="489" stroke="#000" stroke-width="1" stroke-dasharray="3 1" stroke-dashoffset="1"/><line x1="1081.5" y1="489" x2="1081.5" y2="555" stroke="#fff" stroke-width="1"/><line x1="1081.5" y1="489" x2="1081.5" y2="555" stroke="#000" stroke-width="1" stroke-dasharray="3 1" stroke-dashoffset="3"/><line x1="1141.5" y1="423" x2="1141.5" y2="489" stroke="#fff" stroke-width="1"/><line x1="1141.5" y1="423" x2="1141.5" y2="489" stroke="#000" stroke-width="1" stroke-dasharray="3 1" stroke-dashoffset="1"/><line x1="1141.5" y1="489" x2="1141.5" y2="555" stroke="#fff" stroke-width="1"/><line x1="1141.5" y1="489" x2="1141.5" y2="555" stroke="#000" stroke-width="1" stroke-dasharray="3 1" stroke-dashoffset="3"/><line x1="1201.5" y1="423" x2="1201.5" y2="489" stroke="#fff" stroke-width="1"/><line x1="1201.5" y1="423" x2="1201.5" y2="489" stroke="#000" stroke-width="1" stroke-dasharray="3 1" stroke-dashoffset="1"/><line x1="1201.5" y1="489" x2="1201.5" y2="555" stroke="#fff" stroke-width="1"/><line x1="1201.5" y1="489" x2="1201.5" y2="555" stroke="#000" stroke-width="1" stroke-dasharray="3 1" stroke-dashoffset="3"/><line x1="1261.5" y1="423" x2="1261.5" y2="489" stroke="#fff" stroke-width="1"/><line x1="1261.5" y1="423" x2="1261.5" y2="489" stroke="#000" stroke-width="1" stroke-dasharray="3 1" stroke-dashoffset="1"/><line x1="1261.5" y1="489" x2="1261.5" y2="555" stroke="#fff" stroke-width="1"/><line x1="1261.5" y1="489" x2="1261.5" y2="555" stroke="#000" stroke-width="1" stroke-dasharray="3 1" stroke-dashoffset="3"/><line x1="1321.5" y1="357" x2="1321.5" y2="490" stroke="#000" stroke-width="1"/><line x1="1321.5" y1="489" x2="1321.5" y2="555" stroke="#fff" stroke-width="1"/><line x1="1321.5" y1="489" x2="1321.5" y2="555" stroke="#000" stroke-width="1" stroke-dasharray="3 1" stroke-dashoffset="3"/><line x1="1377.5" y1="357" x2="1377.5" y2="490" stroke="#000" stroke-width="1"/><line x1="1377.5" y1="489" x2="1377.5" y2="555" stroke="#fff" stroke-width="1"/><line x1="1377.5" y1="489" x2="1377.5" y2="555" stroke="#000" stroke-width="1" stroke-dasharray="3 1" stroke-dashoffset="3"/><line x1="1432.5" y1="357" x2="1432.5" y2="490" stroke="#000" stroke-width="1"/><line x1="1432.5" y1="489" x2="1432.5" y2="555" stroke="#fff" stroke-width="1"/><line x1="1432.5" y1="489" x2="1432.5" y2="555" stroke="#000" stroke-width="1" stroke-dasharray="3 1" stroke-dashoffset="3"/><line x1="279" y1="423.5" x2="547" y2="423.5" stroke="#fff" stroke-width="1"/><line x1="279" y1="423.5" x2="547" y2="423.5" stroke="#000" stroke-width="1" stroke-dasharray="3 1" stroke-dashoffset="3"/><line x1="794" y1="423.5" x2="1082" y2="423.5" stroke="#fff" stroke-width="1"/><line x1="794" y1="423.5" x2="1082" y2="423.5" stroke="#000" stroke-width="1" stroke-dasharray="3 1" stroke-dashoffset="2"/><line x1="1081" y1="423.5" x2="1322" y2="423.5" stroke="#000" stroke-width="1"/><line x1="26" y1="489.5" x2="1321" y2="489.5" stroke="#fff" stroke-width="1"/><line x1="26" y1="489.5" x2="1321" y2="489.5" stroke="#000" stroke-width="1" stroke-dasharray="3 1" stroke-dashoffset="2"/><line x1="1321" y1="489.5" x2="1433" y2="489.5" stroke="#000" stroke-width="1"/><line x1="1432" y1="489.5" x2="1510" y2="489.5" stroke="#fff" stroke-width="1"/><line x1="1432" y1="489.5" x2="1510" y2="489.5" stroke="#000" stroke-width="1" stroke-dasharray="3 1" stroke-dashoffset="0"/><line x1="26" y1="555.5" x2="1510" y2="555.5" stroke="#fff" stroke-width="1"/><line x1="26" y1="555.5" x2="1510" y2="555.5" stroke="#000" stroke-width="1" stroke-dasharray="3 1" stroke-dashoffset="2"/><line x1="69.5" y1="555" x2="69.5" y2="581" stroke="#fff" stroke-width="1"/><line x1="69.5" y1="555" x2="69.5" y2="581" stroke="#000" stroke-width="1" stroke-dasharray="3 1" stroke-dashoffset="1"/><line x1="210.5" y1="555" x2="210.5" y2="581" stroke="#fff" stroke-width="1"/><line x1="210.5" y1="555" x2="210.5" y2="581" stroke="#000" stroke-width="1" stroke-dasharray="3 1" stroke-dashoffset="1"/><line x1="279.5" y1="555" x2="279.5" y2="581" stroke="#fff" stroke-width="1"/><line x1="279.5" y1="555" x2="279.5" y2="581" stroke="#000" stroke-width="1" stroke-dasharray="3 1" stroke-dashoffset="1"/><line x1="343.5" y1="555" x2="343.5" y2="581" stroke="#fff" stroke-width="1"/><line x1="343.5" y1="555" x2="343.5" y2="581" stroke="#000" stroke-width="1" stroke-dasharray="3 1" stroke-dashoffset="1"/><line x1="408.5" y1="555" x2="408.5" y2="581" stroke="#fff" stroke-width="1"/><line x1="408.5" y1="555" x2="408.5" y2="581" stroke="#000" stroke-width="1" stroke-dasharray="3 1" stroke-dashoffset="1"/><line x1="479.5" y1="555" x2="479.5" y2="581" stroke="#fff" stroke-width="1"/><line x1="479.5" y1="555" x2="479.5" y2="581" stroke="#000" stroke-width="1" stroke-dasharray="3 1" stroke-dashoffset="1"/><line x1="546.5" y1="555" x2="546.5" y2="581" stroke="#fff" stroke-width="1"/><line x1="546.5" y1="555" x2="546.5" y2="581" stroke="#000" stroke-width="1" stroke-dasharray="3 1" stroke-dashoffset="1"/><line x1="613.5" y1="555" x2="613.5" y2="581" stroke="#fff" stroke-width="1"/><line x1="613.5" y1="555" x2="613.5" y2="581" stroke="#000" stroke-width="1" stroke-dasharray="3 1" stroke-dashoffset="1"/><line x1="659.5" y1="555" x2="659.5" y2="581" stroke="#fff" stroke-width="1"/><line x1="659.5" y1="555" x2="659.5" y2="581" stroke="#000" stroke-width="1" stroke-dasharray="3 1" stroke-dashoffset="1"/><line x1="728.5" y1="555" x2="728.5" y2="581" stroke="#fff" stroke-width="1"/><line x1="728.5" y1="555" x2="728.5" y2="581" stroke="#000" stroke-width="1" stroke-dasharray="3 1" stroke-dashoffset="1"/><line x1="794.5" y1="555" x2="794.5" y2="581" stroke="#fff" stroke-width="1"/><line x1="794.5" y1="555" x2="794.5" y2="581" stroke="#000" stroke-width="1" stroke-dasharray="3 1" stroke-dashoffset="1"/><line x1="849.5" y1="555" x2="849.5" y2="581" stroke="#fff" stroke-width="1"/><line x1="849.5" y1="555" x2="849.5" y2="581" stroke="#000" stroke-width="1" stroke-dasharray="3 1" stroke-dashoffset="1"/><line x1="904.5" y1="555" x2="904.5" y2="581" stroke="#fff" stroke-width="1"/><line x1="904.5" y1="555" x2="904.5" y2="581" stroke="#000" stroke-width="1" stroke-dasharray="3 1" stroke-dashoffset="1"/><line x1="959.5" y1="555" x2="959.5" y2="581" stroke="#fff" stroke-width="1"/><line x1="959.5" y1="555" x2="959.5" y2="581" stroke="#000" stroke-width="1" stroke-dasharray="3 1" stroke-dashoffset="1"/><line x1="1014.5" y1="555" x2="1014.5" y2="581" stroke="#fff" stroke-width="1"/><line x1="1014.5" y1="555" x2="1014.5" y2="581" stroke="#000" stroke-width="1" stroke-dasharray="3 1" stroke-dashoffset="1"/><line x1="1081.5" y1="555" x2="1081.5" y2="581" stroke="#fff" stroke-width="1"/><line x1="1081.5" y1="555" x2="1081.5" y2="581" stroke="#000" stroke-width="1" stroke-dasharray="3 1" stroke-dashoffset="1"/><line x1="1141.5" y1="555" x2="1141.5" y2="581" stroke="#fff" stroke-width="1"/><line x1="1141.5" y1="555" x2="1141.5" y2="581" stroke="#000" stroke-width="1" stroke-dasharray="3 1" stroke-dashoffset="1"/><line x1="1201.5" y1="555" x2="1201.5" y2="581" stroke="#fff" stroke-width="1"/><line x1="1201.5" y1="555" x2="1201.5" y2="581" stroke="#000" stroke-width="1" stroke-dasharray="3 1" stroke-dashoffset="1"/><line x1="1261.5" y1="555" x2="1261.5" y2="581" stroke="#fff" stroke-width="1"/><line x1="1261.5" y1="555" x2="1261.5" y2="581" stroke="#000" stroke-width="1" stroke-dasharray="3 1" stroke-dashoffset="1"/><line x1="1321.5" y1="555" x2="1321.5" y2="581" stroke="#fff" stroke-width="1"/><line x1="1321.5" y1="555" x2="1321.5" y2="581" stroke="#000" stroke-width="1" stroke-dasharray="3 1" stroke-dashoffset="1"/><line x1="1377.5" y1="555" x2="1377.5" y2="581" stroke="#fff" stroke-width="1"/><line x1="1377.5" y1="555" x2="1377.5" y2="581" stroke="#000" stroke-width="1" stroke-dasharray="3 1" stroke-dashoffset="1"/><line x1="1432.5" y1="555" x2="1432.5" y2="581" stroke="#fff" stroke-width="1"/><line x1="1432.5" y1="555" x2="1432.5" y2="581" stroke="#000" stroke-width="1" stroke-dasharray="3 1" stroke-dashoffset="1"/><line x1="1509.5" y1="555" x2="1509.5" y2="581" stroke="#fff" stroke-width="1"/><line x1="1509.5" y1="555" x2="1509.5" y2="581" stroke="#000" stroke-width="1" stroke-dasharray="3 1" stroke-dashoffset="1"/><line x1="26" y1="581.5" x2="1510" y2="581.5" stroke="#fff" stroke-width="1"/><line x1="26" y1="581.5" x2="1510" y2="581.5" stroke="#000" stroke-width="1" stroke-dasharray="3 1" stroke-dashoffset="2"/><line x1="69.5" y1="581" x2="69.5" y2="607" stroke="#fff" stroke-width="1"/><line x1="69.5" y1="581" x2="69.5" y2="607" stroke="#000" stroke-width="1" stroke-dasharray="3 1" stroke-dashoffset="3"/><line x1="166.5" y1="581" x2="166.5" y2="607" stroke="#fff" stroke-width="1"/><line x1="166.5" y1="581" x2="166.5" y2="607" stroke="#000" stroke-width="1" stroke-dasharray="3 1" stroke-dashoffset="3"/><line x1="210.5" y1="581" x2="210.5" y2="607" stroke="#fff" stroke-width="1"/><line x1="210.5" y1="581" x2="210.5" y2="607" stroke="#000" stroke-width="1" stroke-dasharray="3 1" stroke-dashoffset="3"/><line x1="279.5" y1="581" x2="279.5" y2="607" stroke="#fff" stroke-width="1"/><line x1="279.5" y1="581" x2="279.5" y2="607" stroke="#000" stroke-width="1" stroke-dasharray="3 1" stroke-dashoffset="3"/><line x1="343.5" y1="581" x2="343.5" y2="607" stroke="#fff" stroke-width="1"/><line x1="343.5" y1="581" x2="343.5" y2="607" stroke="#000" stroke-width="1" stroke-dasharray="3 1" stroke-dashoffset="3"/><line x1="408.5" y1="581" x2="408.5" y2="607" stroke="#fff" stroke-width="1"/><line x1="408.5" y1="581" x2="408.5" y2="607" stroke="#000" stroke-width="1" stroke-dasharray="3 1" stroke-dashoffset="3"/><line x1="479.5" y1="581" x2="479.5" y2="607" stroke="#fff" stroke-width="1"/><line x1="479.5" y1="581" x2="479.5" y2="607" stroke="#000" stroke-width="1" stroke-dasharray="3 1" stroke-dashoffset="3"/><line x1="546.5" y1="581" x2="546.5" y2="607" stroke="#fff" stroke-width="1"/><line x1="546.5" y1="581" x2="546.5" y2="607" stroke="#000" stroke-width="1" stroke-dasharray="3 1" stroke-dashoffset="3"/><line x1="613.5" y1="581" x2="613.5" y2="607" stroke="#fff" stroke-width="1"/><line x1="613.5" y1="581" x2="613.5" y2="607" stroke="#000" stroke-width="1" stroke-dasharray="3 1" stroke-dashoffset="3"/><line x1="659.5" y1="581" x2="659.5" y2="607" stroke="#fff" stroke-width="1"/><line x1="659.5" y1="581" x2="659.5" y2="607" stroke="#000" stroke-width="1" stroke-dasharray="3 1" stroke-dashoffset="3"/><line x1="728.5" y1="581" x2="728.5" y2="607" stroke="#fff" stroke-width="1"/><line x1="728.5" y1="581" x2="728.5" y2="607" stroke="#000" stroke-width="1" stroke-dasharray="3 1" stroke-dashoffset="3"/><line x1="794.5" y1="581" x2="794.5" y2="607" stroke="#fff" stroke-width="1"/><line x1="794.5" y1="581" x2="794.5" y2="607" stroke="#000" stroke-width="1" stroke-dasharray="3 1" stroke-dashoffset="3"/><line x1="849.5" y1="581" x2="849.5" y2="607" stroke="#fff" stroke-width="1"/><line x1="849.5" y1="581" x2="849.5" y2="607" stroke="#000" stroke-width="1" stroke-dasharray="3 1" stroke-dashoffset="3"/><line x1="904.5" y1="581" x2="904.5" y2="607" stroke="#fff" stroke-width="1"/><line x1="904.5" y1="581" x2="904.5" y2="607" stroke="#000" stroke-width="1" stroke-dasharray="3 1" stroke-dashoffset="3"/><line x1="959.5" y1="581" x2="959.5" y2="607" stroke="#fff" stroke-width="1"/><line x1="959.5" y1="581" x2="959.5" y2="607" stroke="#000" stroke-width="1" stroke-dasharray="3 1" stroke-dashoffset="3"/><line x1="1014.5" y1="581" x2="1014.5" y2="607" stroke="#fff" stroke-width="1"/><line x1="1014.5" y1="581" x2="1014.5" y2="607" stroke="#000" stroke-width="1" stroke-dasharray="3 1" stroke-dashoffset="3"/><line x1="1081.5" y1="581" x2="1081.5" y2="607" stroke="#fff" stroke-width="1"/><line x1="1081.5" y1="581" x2="1081.5" y2="607" stroke="#000" stroke-width="1" stroke-dasharray="3 1" stroke-dashoffset="3"/><line x1="1141.5" y1="581" x2="1141.5" y2="607" stroke="#fff" stroke-width="1"/><line x1="1141.5" y1="581" x2="1141.5" y2="607" stroke="#000" stroke-width="1" stroke-dasharray="3 1" stroke-dashoffset="3"/><line x1="1201.5" y1="581" x2="1201.5" y2="607" stroke="#fff" stroke-width="1"/><line x1="1201.5" y1="581" x2="1201.5" y2="607" stroke="#000" stroke-width="1" stroke-dasharray="3 1" stroke-dashoffset="3"/><line x1="1261.5" y1="581" x2="1261.5" y2="607" stroke="#fff" stroke-width="1"/><line x1="1261.5" y1="581" x2="1261.5" y2="607" stroke="#000" stroke-width="1" stroke-dasharray="3 1" stroke-dashoffset="3"/><line x1="1321.5" y1="581" x2="1321.5" y2="607" stroke="#fff" stroke-width="1"/><line x1="1321.5" y1="581" x2="1321.5" y2="607" stroke="#000" stroke-width="1" stroke-dasharray="3 1" stroke-dashoffset="3"/><line x1="1377.5" y1="581" x2="1377.5" y2="607" stroke="#fff" stroke-width="1"/><line x1="1377.5" y1="581" x2="1377.5" y2="607" stroke="#000" stroke-width="1" stroke-dasharray="3 1" stroke-dashoffset="3"/><line x1="1432.5" y1="581" x2="1432.5" y2="607" stroke="#fff" stroke-width="1"/><line x1="1432.5" y1="581" x2="1432.5" y2="607" stroke="#000" stroke-width="1" stroke-dasharray="3 1" stroke-dashoffset="3"/><line x1="1509.5" y1="581" x2="1509.5" y2="607" stroke="#fff" stroke-width="1"/><line x1="1509.5" y1="581" x2="1509.5" y2="607" stroke="#000" stroke-width="1" stroke-dasharray="3 1" stroke-dashoffset="3"/><line x1="26" y1="607.5" x2="1510" y2="607.5" stroke="#fff" stroke-width="1"/><line x1="26" y1="607.5" x2="1510" y2="607.5" stroke="#000" stroke-width="1" stroke-dasharray="3 1" stroke-dashoffset="2"/><line x1="69.5" y1="607" x2="69.5" y2="633" stroke="#fff" stroke-width="1"/><line x1="69.5" y1="607" x2="69.5" y2="633" stroke="#000" stroke-width="1" stroke-dasharray="3 1" stroke-dashoffset="1"/><line x1="166.5" y1="607" x2="166.5" y2="633" stroke="#fff" stroke-width="1"/><line x1="166.5" y1="607" x2="166.5" y2="633" stroke="#000" stroke-width="1" stroke-dasharray="3 1" stroke-dashoffset="1"/><line x1="210.5" y1="607" x2="210.5" y2="633" stroke="#fff" stroke-width="1"/><line x1="210.5" y1="607" x2="210.5" y2="633" stroke="#000" stroke-width="1" stroke-dasharray="3 1" stroke-dashoffset="1"/><line x1="279.5" y1="607" x2="279.5" y2="633" stroke="#fff" stroke-width="1"/><line x1="279.5" y1="607" x2="279.5" y2="633" stroke="#000" stroke-width="1" stroke-dasharray="3 1" stroke-dashoffset="1"/><line x1="343.5" y1="607" x2="343.5" y2="633" stroke="#fff" stroke-width="1"/><line x1="343.5" y1="607" x2="343.5" y2="633" stroke="#000" stroke-width="1" stroke-dasharray="3 1" stroke-dashoffset="1"/><line x1="408.5" y1="607" x2="408.5" y2="633" stroke="#fff" stroke-width="1"/><line x1="408.5" y1="607" x2="408.5" y2="633" stroke="#000" stroke-width="1" stroke-dasharray="3 1" stroke-dashoffset="1"/><line x1="479.5" y1="607" x2="479.5" y2="633" stroke="#fff" stroke-width="1"/><line x1="479.5" y1="607" x2="479.5" y2="633" stroke="#000" stroke-width="1" stroke-dasharray="3 1" stroke-dashoffset="1"/><line x1="546.5" y1="607" x2="546.5" y2="633" stroke="#fff" stroke-width="1"/><line x1="546.5" y1="607" x2="546.5" y2="633" stroke="#000" stroke-width="1" stroke-dasharray="3 1" stroke-dashoffset="1"/><line x1="613.5" y1="607" x2="613.5" y2="633" stroke="#fff" stroke-width="1"/><line x1="613.5" y1="607" x2="613.5" y2="633" stroke="#000" stroke-width="1" stroke-dasharray="3 1" stroke-dashoffset="1"/><line x1="659.5" y1="607" x2="659.5" y2="633" stroke="#fff" stroke-width="1"/><line x1="659.5" y1="607" x2="659.5" y2="633" stroke="#000" stroke-width="1" stroke-dasharray="3 1" stroke-dashoffset="1"/><line x1="728.5" y1="607" x2="728.5" y2="633" stroke="#fff" stroke-width="1"/><line x1="728.5" y1="607" x2="728.5" y2="633" stroke="#000" stroke-width="1" stroke-dasharray="3 1" stroke-dashoffset="1"/><line x1="794.5" y1="607" x2="794.5" y2="633" stroke="#fff" stroke-width="1"/><line x1="794.5" y1="607" x2="794.5" y2="633" stroke="#000" stroke-width="1" stroke-dasharray="3 1" stroke-dashoffset="1"/><line x1="849.5" y1="607" x2="849.5" y2="633" stroke="#fff" stroke-width="1"/><line x1="849.5" y1="607" x2="849.5" y2="633" stroke="#000" stroke-width="1" stroke-dasharray="3 1" stroke-dashoffset="1"/><line x1="904.5" y1="607" x2="904.5" y2="633" stroke="#fff" stroke-width="1"/><line x1="904.5" y1="607" x2="904.5" y2="633" stroke="#000" stroke-width="1" stroke-dasharray="3 1" stroke-dashoffset="1"/><line x1="959.5" y1="607" x2="959.5" y2="633" stroke="#fff" stroke-width="1"/><line x1="959.5" y1="607" x2="959.5" y2="633" stroke="#000" stroke-width="1" stroke-dasharray="3 1" stroke-dashoffset="1"/><line x1="1014.5" y1="607" x2="1014.5" y2="633" stroke="#fff" stroke-width="1"/><line x1="1014.5" y1="607" x2="1014.5" y2="633" stroke="#000" stroke-width="1" stroke-dasharray="3 1" stroke-dashoffset="1"/><line x1="1081.5" y1="607" x2="1081.5" y2="633" stroke="#fff" stroke-width="1"/><line x1="1081.5" y1="607" x2="1081.5" y2="633" stroke="#000" stroke-width="1" stroke-dasharray="3 1" stroke-dashoffset="1"/><line x1="1141.5" y1="607" x2="1141.5" y2="633" stroke="#fff" stroke-width="1"/><line x1="1141.5" y1="607" x2="1141.5" y2="633" stroke="#000" stroke-width="1" stroke-dasharray="3 1" stroke-dashoffset="1"/><line x1="1201.5" y1="607" x2="1201.5" y2="633" stroke="#fff" stroke-width="1"/><line x1="1201.5" y1="607" x2="1201.5" y2="633" stroke="#000" stroke-width="1" stroke-dasharray="3 1" stroke-dashoffset="1"/><line x1="1261.5" y1="607" x2="1261.5" y2="633" stroke="#fff" stroke-width="1"/><line x1="1261.5" y1="607" x2="1261.5" y2="633" stroke="#000" stroke-width="1" stroke-dasharray="3 1" stroke-dashoffset="1"/><line x1="1321.5" y1="607" x2="1321.5" y2="633" stroke="#fff" stroke-width="1"/><line x1="1321.5" y1="607" x2="1321.5" y2="633" stroke="#000" stroke-width="1" stroke-dasharray="3 1" stroke-dashoffset="1"/><line x1="1377.5" y1="607" x2="1377.5" y2="633" stroke="#fff" stroke-width="1"/><line x1="1377.5" y1="607" x2="1377.5" y2="633" stroke="#000" stroke-width="1" stroke-dasharray="3 1" stroke-dashoffset="1"/><line x1="1432.5" y1="607" x2="1432.5" y2="633" stroke="#fff" stroke-width="1"/><line x1="1432.5" y1="607" x2="1432.5" y2="633" stroke="#000" stroke-width="1" stroke-dasharray="3 1" stroke-dashoffset="1"/><line x1="1509.5" y1="607" x2="1509.5" y2="633" stroke="#fff" stroke-width="1"/><line x1="1509.5" y1="607" x2="1509.5" y2="633" stroke="#000" stroke-width="1" stroke-dasharray="3 1" stroke-dashoffset="1"/><line x1="26" y1="633.5" x2="1510" y2="633.5" stroke="#fff" stroke-width="1"/><line x1="26" y1="633.5" x2="1510" y2="633.5" stroke="#000" stroke-width="1" stroke-dasharray="3 1" stroke-dashoffset="2"/><line x1="69.5" y1="633" x2="69.5" y2="659" stroke="#fff" stroke-width="1"/><line x1="69.5" y1="633" x2="69.5" y2="659" stroke="#000" stroke-width="1" stroke-dasharray="3 1" stroke-dashoffset="3"/><line x1="166.5" y1="633" x2="166.5" y2="659" stroke="#fff" stroke-width="1"/><line x1="166.5" y1="633" x2="166.5" y2="659" stroke="#000" stroke-width="1" stroke-dasharray="3 1" stroke-dashoffset="3"/><line x1="210.5" y1="633" x2="210.5" y2="659" stroke="#fff" stroke-width="1"/><line x1="210.5" y1="633" x2="210.5" y2="659" stroke="#000" stroke-width="1" stroke-dasharray="3 1" stroke-dashoffset="3"/><line x1="279.5" y1="633" x2="279.5" y2="659" stroke="#fff" stroke-width="1"/><line x1="279.5" y1="633" x2="279.5" y2="659" stroke="#000" stroke-width="1" stroke-dasharray="3 1" stroke-dashoffset="3"/><line x1="343.5" y1="633" x2="343.5" y2="659" stroke="#fff" stroke-width="1"/><line x1="343.5" y1="633" x2="343.5" y2="659" stroke="#000" stroke-width="1" stroke-dasharray="3 1" stroke-dashoffset="3"/><line x1="408.5" y1="633" x2="408.5" y2="659" stroke="#fff" stroke-width="1"/><line x1="408.5" y1="633" x2="408.5" y2="659" stroke="#000" stroke-width="1" stroke-dasharray="3 1" stroke-dashoffset="3"/><line x1="479.5" y1="633" x2="479.5" y2="659" stroke="#fff" stroke-width="1"/><line x1="479.5" y1="633" x2="479.5" y2="659" stroke="#000" stroke-width="1" stroke-dasharray="3 1" stroke-dashoffset="3"/><line x1="546.5" y1="633" x2="546.5" y2="659" stroke="#fff" stroke-width="1"/><line x1="546.5" y1="633" x2="546.5" y2="659" stroke="#000" stroke-width="1" stroke-dasharray="3 1" stroke-dashoffset="3"/><line x1="613.5" y1="633" x2="613.5" y2="659" stroke="#fff" stroke-width="1"/><line x1="613.5" y1="633" x2="613.5" y2="659" stroke="#000" stroke-width="1" stroke-dasharray="3 1" stroke-dashoffset="3"/><line x1="659.5" y1="633" x2="659.5" y2="659" stroke="#fff" stroke-width="1"/><line x1="659.5" y1="633" x2="659.5" y2="659" stroke="#000" stroke-width="1" stroke-dasharray="3 1" stroke-dashoffset="3"/><line x1="728.5" y1="633" x2="728.5" y2="659" stroke="#fff" stroke-width="1"/><line x1="728.5" y1="633" x2="728.5" y2="659" stroke="#000" stroke-width="1" stroke-dasharray="3 1" stroke-dashoffset="3"/><line x1="794.5" y1="633" x2="794.5" y2="659" stroke="#fff" stroke-width="1"/><line x1="794.5" y1="633" x2="794.5" y2="659" stroke="#000" stroke-width="1" stroke-dasharray="3 1" stroke-dashoffset="3"/><line x1="849.5" y1="633" x2="849.5" y2="659" stroke="#fff" stroke-width="1"/><line x1="849.5" y1="633" x2="849.5" y2="659" stroke="#000" stroke-width="1" stroke-dasharray="3 1" stroke-dashoffset="3"/><line x1="904.5" y1="633" x2="904.5" y2="659" stroke="#fff" stroke-width="1"/><line x1="904.5" y1="633" x2="904.5" y2="659" stroke="#000" stroke-width="1" stroke-dasharray="3 1" stroke-dashoffset="3"/><line x1="959.5" y1="633" x2="959.5" y2="659" stroke="#fff" stroke-width="1"/><line x1="959.5" y1="633" x2="959.5" y2="659" stroke="#000" stroke-width="1" stroke-dasharray="3 1" stroke-dashoffset="3"/><line x1="1014.5" y1="633" x2="1014.5" y2="659" stroke="#fff" stroke-width="1"/><line x1="1014.5" y1="633" x2="1014.5" y2="659" stroke="#000" stroke-width="1" stroke-dasharray="3 1" stroke-dashoffset="3"/><line x1="1081.5" y1="633" x2="1081.5" y2="659" stroke="#fff" stroke-width="1"/><line x1="1081.5" y1="633" x2="1081.5" y2="659" stroke="#000" stroke-width="1" stroke-dasharray="3 1" stroke-dashoffset="3"/><line x1="1141.5" y1="633" x2="1141.5" y2="659" stroke="#fff" stroke-width="1"/><line x1="1141.5" y1="633" x2="1141.5" y2="659" stroke="#000" stroke-width="1" stroke-dasharray="3 1" stroke-dashoffset="3"/><line x1="1201.5" y1="633" x2="1201.5" y2="659" stroke="#fff" stroke-width="1"/><line x1="1201.5" y1="633" x2="1201.5" y2="659" stroke="#000" stroke-width="1" stroke-dasharray="3 1" stroke-dashoffset="3"/><line x1="1261.5" y1="633" x2="1261.5" y2="659" stroke="#fff" stroke-width="1"/><line x1="1261.5" y1="633" x2="1261.5" y2="659" stroke="#000" stroke-width="1" stroke-dasharray="3 1" stroke-dashoffset="3"/><line x1="1321.5" y1="633" x2="1321.5" y2="659" stroke="#fff" stroke-width="1"/><line x1="1321.5" y1="633" x2="1321.5" y2="659" stroke="#000" stroke-width="1" stroke-dasharray="3 1" stroke-dashoffset="3"/><line x1="1377.5" y1="633" x2="1377.5" y2="659" stroke="#fff" stroke-width="1"/><line x1="1377.5" y1="633" x2="1377.5" y2="659" stroke="#000" stroke-width="1" stroke-dasharray="3 1" stroke-dashoffset="3"/><line x1="1432.5" y1="633" x2="1432.5" y2="659" stroke="#fff" stroke-width="1"/><line x1="1432.5" y1="633" x2="1432.5" y2="659" stroke="#000" stroke-width="1" stroke-dasharray="3 1" stroke-dashoffset="3"/><line x1="1509.5" y1="633" x2="1509.5" y2="659" stroke="#fff" stroke-width="1"/><line x1="1509.5" y1="633" x2="1509.5" y2="659" stroke="#000" stroke-width="1" stroke-dasharray="3 1" stroke-dashoffset="3"/><line x1="26" y1="659.5" x2="1510" y2="659.5" stroke="#fff" stroke-width="1"/><line x1="26" y1="659.5" x2="1510" y2="659.5" stroke="#000" stroke-width="1" stroke-dasharray="3 1" stroke-dashoffset="2"/><line x1="69.5" y1="659" x2="69.5" y2="685" stroke="#fff" stroke-width="1"/><line x1="69.5" y1="659" x2="69.5" y2="685" stroke="#000" stroke-width="1" stroke-dasharray="3 1" stroke-dashoffset="1"/><line x1="166.5" y1="659" x2="166.5" y2="685" stroke="#fff" stroke-width="1"/><line x1="166.5" y1="659" x2="166.5" y2="685" stroke="#000" stroke-width="1" stroke-dasharray="3 1" stroke-dashoffset="1"/><line x1="210.5" y1="659" x2="210.5" y2="685" stroke="#fff" stroke-width="1"/><line x1="210.5" y1="659" x2="210.5" y2="685" stroke="#000" stroke-width="1" stroke-dasharray="3 1" stroke-dashoffset="1"/><line x1="279.5" y1="659" x2="279.5" y2="685" stroke="#fff" stroke-width="1"/><line x1="279.5" y1="659" x2="279.5" y2="685" stroke="#000" stroke-width="1" stroke-dasharray="3 1" stroke-dashoffset="1"/><line x1="343.5" y1="659" x2="343.5" y2="685" stroke="#fff" stroke-width="1"/><line x1="343.5" y1="659" x2="343.5" y2="685" stroke="#000" stroke-width="1" stroke-dasharray="3 1" stroke-dashoffset="1"/><line x1="408.5" y1="659" x2="408.5" y2="685" stroke="#fff" stroke-width="1"/><line x1="408.5" y1="659" x2="408.5" y2="685" stroke="#000" stroke-width="1" stroke-dasharray="3 1" stroke-dashoffset="1"/><line x1="479.5" y1="659" x2="479.5" y2="685" stroke="#fff" stroke-width="1"/><line x1="479.5" y1="659" x2="479.5" y2="685" stroke="#000" stroke-width="1" stroke-dasharray="3 1" stroke-dashoffset="1"/><line x1="546.5" y1="659" x2="546.5" y2="685" stroke="#fff" stroke-width="1"/><line x1="546.5" y1="659" x2="546.5" y2="685" stroke="#000" stroke-width="1" stroke-dasharray="3 1" stroke-dashoffset="1"/><line x1="613.5" y1="659" x2="613.5" y2="685" stroke="#fff" stroke-width="1"/><line x1="613.5" y1="659" x2="613.5" y2="685" stroke="#000" stroke-width="1" stroke-dasharray="3 1" stroke-dashoffset="1"/><line x1="659.5" y1="659" x2="659.5" y2="685" stroke="#fff" stroke-width="1"/><line x1="659.5" y1="659" x2="659.5" y2="685" stroke="#000" stroke-width="1" stroke-dasharray="3 1" stroke-dashoffset="1"/><line x1="728.5" y1="659" x2="728.5" y2="685" stroke="#fff" stroke-width="1"/><line x1="728.5" y1="659" x2="728.5" y2="685" stroke="#000" stroke-width="1" stroke-dasharray="3 1" stroke-dashoffset="1"/><line x1="794.5" y1="659" x2="794.5" y2="685" stroke="#fff" stroke-width="1"/><line x1="794.5" y1="659" x2="794.5" y2="685" stroke="#000" stroke-width="1" stroke-dasharray="3 1" stroke-dashoffset="1"/><line x1="849.5" y1="659" x2="849.5" y2="685" stroke="#fff" stroke-width="1"/><line x1="849.5" y1="659" x2="849.5" y2="685" stroke="#000" stroke-width="1" stroke-dasharray="3 1" stroke-dashoffset="1"/><line x1="904.5" y1="659" x2="904.5" y2="685" stroke="#fff" stroke-width="1"/><line x1="904.5" y1="659" x2="904.5" y2="685" stroke="#000" stroke-width="1" stroke-dasharray="3 1" stroke-dashoffset="1"/><line x1="959.5" y1="659" x2="959.5" y2="685" stroke="#fff" stroke-width="1"/><line x1="959.5" y1="659" x2="959.5" y2="685" stroke="#000" stroke-width="1" stroke-dasharray="3 1" stroke-dashoffset="1"/><line x1="1014.5" y1="659" x2="1014.5" y2="685" stroke="#fff" stroke-width="1"/><line x1="1014.5" y1="659" x2="1014.5" y2="685" stroke="#000" stroke-width="1" stroke-dasharray="3 1" stroke-dashoffset="1"/><line x1="1081.5" y1="659" x2="1081.5" y2="685" stroke="#fff" stroke-width="1"/><line x1="1081.5" y1="659" x2="1081.5" y2="685" stroke="#000" stroke-width="1" stroke-dasharray="3 1" stroke-dashoffset="1"/><line x1="1141.5" y1="659" x2="1141.5" y2="685" stroke="#fff" stroke-width="1"/><line x1="1141.5" y1="659" x2="1141.5" y2="685" stroke="#000" stroke-width="1" stroke-dasharray="3 1" stroke-dashoffset="1"/><line x1="1201.5" y1="659" x2="1201.5" y2="685" stroke="#fff" stroke-width="1"/><line x1="1201.5" y1="659" x2="1201.5" y2="685" stroke="#000" stroke-width="1" stroke-dasharray="3 1" stroke-dashoffset="1"/><line x1="1261.5" y1="659" x2="1261.5" y2="685" stroke="#fff" stroke-width="1"/><line x1="1261.5" y1="659" x2="1261.5" y2="685" stroke="#000" stroke-width="1" stroke-dasharray="3 1" stroke-dashoffset="1"/><line x1="1321.5" y1="659" x2="1321.5" y2="685" stroke="#fff" stroke-width="1"/><line x1="1321.5" y1="659" x2="1321.5" y2="685" stroke="#000" stroke-width="1" stroke-dasharray="3 1" stroke-dashoffset="1"/><line x1="1377.5" y1="659" x2="1377.5" y2="685" stroke="#fff" stroke-width="1"/><line x1="1377.5" y1="659" x2="1377.5" y2="685" stroke="#000" stroke-width="1" stroke-dasharray="3 1" stroke-dashoffset="1"/><line x1="1432.5" y1="659" x2="1432.5" y2="685" stroke="#fff" stroke-width="1"/><line x1="1432.5" y1="659" x2="1432.5" y2="685" stroke="#000" stroke-width="1" stroke-dasharray="3 1" stroke-dashoffset="1"/><line x1="1509.5" y1="659" x2="1509.5" y2="685" stroke="#fff" stroke-width="1"/><line x1="1509.5" y1="659" x2="1509.5" y2="685" stroke="#000" stroke-width="1" stroke-dasharray="3 1" stroke-dashoffset="1"/><line x1="26" y1="685.5" x2="1510" y2="685.5" stroke="#fff" stroke-width="1"/><line x1="26" y1="685.5" x2="1510" y2="685.5" stroke="#000" stroke-width="1" stroke-dasharray="3 1" stroke-dashoffset="2"/><line x1="69.5" y1="685" x2="69.5" y2="711" stroke="#fff" stroke-width="1"/><line x1="69.5" y1="685" x2="69.5" y2="711" stroke="#000" stroke-width="1" stroke-dasharray="3 1" stroke-dashoffset="3"/><line x1="166.5" y1="685" x2="166.5" y2="711" stroke="#fff" stroke-width="1"/><line x1="166.5" y1="685" x2="166.5" y2="711" stroke="#000" stroke-width="1" stroke-dasharray="3 1" stroke-dashoffset="3"/><line x1="210.5" y1="685" x2="210.5" y2="711" stroke="#fff" stroke-width="1"/><line x1="210.5" y1="685" x2="210.5" y2="711" stroke="#000" stroke-width="1" stroke-dasharray="3 1" stroke-dashoffset="3"/><line x1="279.5" y1="685" x2="279.5" y2="711" stroke="#fff" stroke-width="1"/><line x1="279.5" y1="685" x2="279.5" y2="711" stroke="#000" stroke-width="1" stroke-dasharray="3 1" stroke-dashoffset="3"/><line x1="343.5" y1="685" x2="343.5" y2="711" stroke="#fff" stroke-width="1"/><line x1="343.5" y1="685" x2="343.5" y2="711" stroke="#000" stroke-width="1" stroke-dasharray="3 1" stroke-dashoffset="3"/><line x1="408.5" y1="685" x2="408.5" y2="711" stroke="#fff" stroke-width="1"/><line x1="408.5" y1="685" x2="408.5" y2="711" stroke="#000" stroke-width="1" stroke-dasharray="3 1" stroke-dashoffset="3"/><line x1="479.5" y1="685" x2="479.5" y2="711" stroke="#fff" stroke-width="1"/><line x1="479.5" y1="685" x2="479.5" y2="711" stroke="#000" stroke-width="1" stroke-dasharray="3 1" stroke-dashoffset="3"/><line x1="546.5" y1="685" x2="546.5" y2="711" stroke="#fff" stroke-width="1"/><line x1="546.5" y1="685" x2="546.5" y2="711" stroke="#000" stroke-width="1" stroke-dasharray="3 1" stroke-dashoffset="3"/><line x1="613.5" y1="685" x2="613.5" y2="711" stroke="#fff" stroke-width="1"/><line x1="613.5" y1="685" x2="613.5" y2="711" stroke="#000" stroke-width="1" stroke-dasharray="3 1" stroke-dashoffset="3"/><line x1="659.5" y1="685" x2="659.5" y2="711" stroke="#fff" stroke-width="1"/><line x1="659.5" y1="685" x2="659.5" y2="711" stroke="#000" stroke-width="1" stroke-dasharray="3 1" stroke-dashoffset="3"/><line x1="728.5" y1="685" x2="728.5" y2="711" stroke="#fff" stroke-width="1"/><line x1="728.5" y1="685" x2="728.5" y2="711" stroke="#000" stroke-width="1" stroke-dasharray="3 1" stroke-dashoffset="3"/><line x1="794.5" y1="685" x2="794.5" y2="711" stroke="#fff" stroke-width="1"/><line x1="794.5" y1="685" x2="794.5" y2="711" stroke="#000" stroke-width="1" stroke-dasharray="3 1" stroke-dashoffset="3"/><line x1="849.5" y1="685" x2="849.5" y2="711" stroke="#fff" stroke-width="1"/><line x1="849.5" y1="685" x2="849.5" y2="711" stroke="#000" stroke-width="1" stroke-dasharray="3 1" stroke-dashoffset="3"/><line x1="904.5" y1="685" x2="904.5" y2="711" stroke="#fff" stroke-width="1"/><line x1="904.5" y1="685" x2="904.5" y2="711" stroke="#000" stroke-width="1" stroke-dasharray="3 1" stroke-dashoffset="3"/><line x1="959.5" y1="685" x2="959.5" y2="711" stroke="#fff" stroke-width="1"/><line x1="959.5" y1="685" x2="959.5" y2="711" stroke="#000" stroke-width="1" stroke-dasharray="3 1" stroke-dashoffset="3"/><line x1="1014.5" y1="685" x2="1014.5" y2="711" stroke="#fff" stroke-width="1"/><line x1="1014.5" y1="685" x2="1014.5" y2="711" stroke="#000" stroke-width="1" stroke-dasharray="3 1" stroke-dashoffset="3"/><line x1="1081.5" y1="685" x2="1081.5" y2="711" stroke="#fff" stroke-width="1"/><line x1="1081.5" y1="685" x2="1081.5" y2="711" stroke="#000" stroke-width="1" stroke-dasharray="3 1" stroke-dashoffset="3"/><line x1="1141.5" y1="685" x2="1141.5" y2="711" stroke="#fff" stroke-width="1"/><line x1="1141.5" y1="685" x2="1141.5" y2="711" stroke="#000" stroke-width="1" stroke-dasharray="3 1" stroke-dashoffset="3"/><line x1="1201.5" y1="685" x2="1201.5" y2="711" stroke="#fff" stroke-width="1"/><line x1="1201.5" y1="685" x2="1201.5" y2="711" stroke="#000" stroke-width="1" stroke-dasharray="3 1" stroke-dashoffset="3"/><line x1="1261.5" y1="685" x2="1261.5" y2="711" stroke="#fff" stroke-width="1"/><line x1="1261.5" y1="685" x2="1261.5" y2="711" stroke="#000" stroke-width="1" stroke-dasharray="3 1" stroke-dashoffset="3"/><line x1="1321.5" y1="685" x2="1321.5" y2="711" stroke="#fff" stroke-width="1"/><line x1="1321.5" y1="685" x2="1321.5" y2="711" stroke="#000" stroke-width="1" stroke-dasharray="3 1" stroke-dashoffset="3"/><line x1="1377.5" y1="685" x2="1377.5" y2="711" stroke="#fff" stroke-width="1"/><line x1="1377.5" y1="685" x2="1377.5" y2="711" stroke="#000" stroke-width="1" stroke-dasharray="3 1" stroke-dashoffset="3"/><line x1="1432.5" y1="685" x2="1432.5" y2="711" stroke="#fff" stroke-width="1"/><line x1="1432.5" y1="685" x2="1432.5" y2="711" stroke="#000" stroke-width="1" stroke-dasharray="3 1" stroke-dashoffset="3"/><line x1="1509.5" y1="685" x2="1509.5" y2="711" stroke="#fff" stroke-width="1"/><line x1="1509.5" y1="685" x2="1509.5" y2="711" stroke="#000" stroke-width="1" stroke-dasharray="3 1" stroke-dashoffset="3"/><line x1="26" y1="711.5" x2="1510" y2="711.5" stroke="#fff" stroke-width="1"/><line x1="26" y1="711.5" x2="1510" y2="711.5" stroke="#000" stroke-width="1" stroke-dasharray="3 1" stroke-dashoffset="2"/><line x1="69.5" y1="711" x2="69.5" y2="737" stroke="#fff" stroke-width="1"/><line x1="69.5" y1="711" x2="69.5" y2="737" stroke="#000" stroke-width="1" stroke-dasharray="3 1" stroke-dashoffset="1"/><line x1="166.5" y1="711" x2="166.5" y2="737" stroke="#fff" stroke-width="1"/><line x1="166.5" y1="711" x2="166.5" y2="737" stroke="#000" stroke-width="1" stroke-dasharray="3 1" stroke-dashoffset="1"/><line x1="210.5" y1="711" x2="210.5" y2="737" stroke="#fff" stroke-width="1"/><line x1="210.5" y1="711" x2="210.5" y2="737" stroke="#000" stroke-width="1" stroke-dasharray="3 1" stroke-dashoffset="1"/><line x1="279.5" y1="711" x2="279.5" y2="737" stroke="#fff" stroke-width="1"/><line x1="279.5" y1="711" x2="279.5" y2="737" stroke="#000" stroke-width="1" stroke-dasharray="3 1" stroke-dashoffset="1"/><line x1="343.5" y1="711" x2="343.5" y2="737" stroke="#fff" stroke-width="1"/><line x1="343.5" y1="711" x2="343.5" y2="737" stroke="#000" stroke-width="1" stroke-dasharray="3 1" stroke-dashoffset="1"/><line x1="408.5" y1="711" x2="408.5" y2="737" stroke="#fff" stroke-width="1"/><line x1="408.5" y1="711" x2="408.5" y2="737" stroke="#000" stroke-width="1" stroke-dasharray="3 1" stroke-dashoffset="1"/><line x1="479.5" y1="711" x2="479.5" y2="737" stroke="#fff" stroke-width="1"/><line x1="479.5" y1="711" x2="479.5" y2="737" stroke="#000" stroke-width="1" stroke-dasharray="3 1" stroke-dashoffset="1"/><line x1="546.5" y1="711" x2="546.5" y2="737" stroke="#fff" stroke-width="1"/><line x1="546.5" y1="711" x2="546.5" y2="737" stroke="#000" stroke-width="1" stroke-dasharray="3 1" stroke-dashoffset="1"/><line x1="613.5" y1="711" x2="613.5" y2="737" stroke="#fff" stroke-width="1"/><line x1="613.5" y1="711" x2="613.5" y2="737" stroke="#000" stroke-width="1" stroke-dasharray="3 1" stroke-dashoffset="1"/><line x1="659.5" y1="711" x2="659.5" y2="737" stroke="#fff" stroke-width="1"/><line x1="659.5" y1="711" x2="659.5" y2="737" stroke="#000" stroke-width="1" stroke-dasharray="3 1" stroke-dashoffset="1"/><line x1="728.5" y1="711" x2="728.5" y2="737" stroke="#fff" stroke-width="1"/><line x1="728.5" y1="711" x2="728.5" y2="737" stroke="#000" stroke-width="1" stroke-dasharray="3 1" stroke-dashoffset="1"/><line x1="794.5" y1="711" x2="794.5" y2="737" stroke="#fff" stroke-width="1"/><line x1="794.5" y1="711" x2="794.5" y2="737" stroke="#000" stroke-width="1" stroke-dasharray="3 1" stroke-dashoffset="1"/><line x1="849.5" y1="711" x2="849.5" y2="737" stroke="#fff" stroke-width="1"/><line x1="849.5" y1="711" x2="849.5" y2="737" stroke="#000" stroke-width="1" stroke-dasharray="3 1" stroke-dashoffset="1"/><line x1="904.5" y1="711" x2="904.5" y2="737" stroke="#fff" stroke-width="1"/><line x1="904.5" y1="711" x2="904.5" y2="737" stroke="#000" stroke-width="1" stroke-dasharray="3 1" stroke-dashoffset="1"/><line x1="959.5" y1="711" x2="959.5" y2="737" stroke="#fff" stroke-width="1"/><line x1="959.5" y1="711" x2="959.5" y2="737" stroke="#000" stroke-width="1" stroke-dasharray="3 1" stroke-dashoffset="1"/><line x1="1014.5" y1="711" x2="1014.5" y2="737" stroke="#fff" stroke-width="1"/><line x1="1014.5" y1="711" x2="1014.5" y2="737" stroke="#000" stroke-width="1" stroke-dasharray="3 1" stroke-dashoffset="1"/><line x1="1081.5" y1="711" x2="1081.5" y2="737" stroke="#fff" stroke-width="1"/><line x1="1081.5" y1="711" x2="1081.5" y2="737" stroke="#000" stroke-width="1" stroke-dasharray="3 1" stroke-dashoffset="1"/><line x1="1141.5" y1="711" x2="1141.5" y2="737" stroke="#fff" stroke-width="1"/><line x1="1141.5" y1="711" x2="1141.5" y2="737" stroke="#000" stroke-width="1" stroke-dasharray="3 1" stroke-dashoffset="1"/><line x1="1201.5" y1="711" x2="1201.5" y2="737" stroke="#fff" stroke-width="1"/><line x1="1201.5" y1="711" x2="1201.5" y2="737" stroke="#000" stroke-width="1" stroke-dasharray="3 1" stroke-dashoffset="1"/><line x1="1261.5" y1="711" x2="1261.5" y2="737" stroke="#fff" stroke-width="1"/><line x1="1261.5" y1="711" x2="1261.5" y2="737" stroke="#000" stroke-width="1" stroke-dasharray="3 1" stroke-dashoffset="1"/><line x1="1321.5" y1="711" x2="1321.5" y2="737" stroke="#fff" stroke-width="1"/><line x1="1321.5" y1="711" x2="1321.5" y2="737" stroke="#000" stroke-width="1" stroke-dasharray="3 1" stroke-dashoffset="1"/><line x1="1377.5" y1="711" x2="1377.5" y2="737" stroke="#fff" stroke-width="1"/><line x1="1377.5" y1="711" x2="1377.5" y2="737" stroke="#000" stroke-width="1" stroke-dasharray="3 1" stroke-dashoffset="1"/><line x1="1432.5" y1="711" x2="1432.5" y2="737" stroke="#fff" stroke-width="1"/><line x1="1432.5" y1="711" x2="1432.5" y2="737" stroke="#000" stroke-width="1" stroke-dasharray="3 1" stroke-dashoffset="1"/><line x1="1509.5" y1="711" x2="1509.5" y2="737" stroke="#fff" stroke-width="1"/><line x1="1509.5" y1="711" x2="1509.5" y2="737" stroke="#000" stroke-width="1" stroke-dasharray="3 1" stroke-dashoffset="1"/><line x1="26" y1="737.5" x2="1510" y2="737.5" stroke="#fff" stroke-width="1"/><line x1="26" y1="737.5" x2="1510" y2="737.5" stroke="#000" stroke-width="1" stroke-dasharray="3 1" stroke-dashoffset="2"/><line x1="26" y1="763.5" x2="1510" y2="763.5" stroke="#fff" stroke-width="1"/><line x1="26" y1="763.5" x2="1510" y2="763.5" stroke="#000" stroke-width="1" stroke-dasharray="3 1" stroke-dashoffset="2"/><line x1="69.5" y1="763" x2="69.5" y2="789" stroke="#fff" stroke-width="1"/><line x1="69.5" y1="763" x2="69.5" y2="789" stroke="#000" stroke-width="1" stroke-dasharray="3 1" stroke-dashoffset="1"/><line x1="210.5" y1="763" x2="210.5" y2="789" stroke="#fff" stroke-width="1"/><line x1="210.5" y1="763" x2="210.5" y2="789" stroke="#000" stroke-width="1" stroke-dasharray="3 1" stroke-dashoffset="1"/><line x1="279.5" y1="763" x2="279.5" y2="789" stroke="#fff" stroke-width="1"/><line x1="279.5" y1="763" x2="279.5" y2="789" stroke="#000" stroke-width="1" stroke-dasharray="3 1" stroke-dashoffset="1"/><line x1="343.5" y1="763" x2="343.5" y2="789" stroke="#fff" stroke-width="1"/><line x1="343.5" y1="763" x2="343.5" y2="789" stroke="#000" stroke-width="1" stroke-dasharray="3 1" stroke-dashoffset="1"/><line x1="408.5" y1="763" x2="408.5" y2="789" stroke="#fff" stroke-width="1"/><line x1="408.5" y1="763" x2="408.5" y2="789" stroke="#000" stroke-width="1" stroke-dasharray="3 1" stroke-dashoffset="1"/><line x1="479.5" y1="763" x2="479.5" y2="789" stroke="#fff" stroke-width="1"/><line x1="479.5" y1="763" x2="479.5" y2="789" stroke="#000" stroke-width="1" stroke-dasharray="3 1" stroke-dashoffset="1"/><line x1="546.5" y1="763" x2="546.5" y2="789" stroke="#fff" stroke-width="1"/><line x1="546.5" y1="763" x2="546.5" y2="789" stroke="#000" stroke-width="1" stroke-dasharray="3 1" stroke-dashoffset="1"/><line x1="613.5" y1="763" x2="613.5" y2="789" stroke="#fff" stroke-width="1"/><line x1="613.5" y1="763" x2="613.5" y2="789" stroke="#000" stroke-width="1" stroke-dasharray="3 1" stroke-dashoffset="1"/><line x1="659.5" y1="763" x2="659.5" y2="789" stroke="#fff" stroke-width="1"/><line x1="659.5" y1="763" x2="659.5" y2="789" stroke="#000" stroke-width="1" stroke-dasharray="3 1" stroke-dashoffset="1"/><line x1="728.5" y1="763" x2="728.5" y2="789" stroke="#fff" stroke-width="1"/><line x1="728.5" y1="763" x2="728.5" y2="789" stroke="#000" stroke-width="1" stroke-dasharray="3 1" stroke-dashoffset="1"/><line x1="794.5" y1="763" x2="794.5" y2="789" stroke="#fff" stroke-width="1"/><line x1="794.5" y1="763" x2="794.5" y2="789" stroke="#000" stroke-width="1" stroke-dasharray="3 1" stroke-dashoffset="1"/><line x1="849.5" y1="763" x2="849.5" y2="789" stroke="#fff" stroke-width="1"/><line x1="849.5" y1="763" x2="849.5" y2="789" stroke="#000" stroke-width="1" stroke-dasharray="3 1" stroke-dashoffset="1"/><line x1="904.5" y1="763" x2="904.5" y2="789" stroke="#fff" stroke-width="1"/><line x1="904.5" y1="763" x2="904.5" y2="789" stroke="#000" stroke-width="1" stroke-dasharray="3 1" stroke-dashoffset="1"/><line x1="959.5" y1="763" x2="959.5" y2="789" stroke="#fff" stroke-width="1"/><line x1="959.5" y1="763" x2="959.5" y2="789" stroke="#000" stroke-width="1" stroke-dasharray="3 1" stroke-dashoffset="1"/><line x1="1014.5" y1="763" x2="1014.5" y2="789" stroke="#fff" stroke-width="1"/><line x1="1014.5" y1="763" x2="1014.5" y2="789" stroke="#000" stroke-width="1" stroke-dasharray="3 1" stroke-dashoffset="1"/><line x1="1081.5" y1="763" x2="1081.5" y2="789" stroke="#fff" stroke-width="1"/><line x1="1081.5" y1="763" x2="1081.5" y2="789" stroke="#000" stroke-width="1" stroke-dasharray="3 1" stroke-dashoffset="1"/><line x1="1141.5" y1="763" x2="1141.5" y2="789" stroke="#fff" stroke-width="1"/><line x1="1141.5" y1="763" x2="1141.5" y2="789" stroke="#000" stroke-width="1" stroke-dasharray="3 1" stroke-dashoffset="1"/><line x1="1201.5" y1="763" x2="1201.5" y2="789" stroke="#fff" stroke-width="1"/><line x1="1201.5" y1="763" x2="1201.5" y2="789" stroke="#000" stroke-width="1" stroke-dasharray="3 1" stroke-dashoffset="1"/><line x1="1261.5" y1="763" x2="1261.5" y2="789" stroke="#fff" stroke-width="1"/><line x1="1261.5" y1="763" x2="1261.5" y2="789" stroke="#000" stroke-width="1" stroke-dasharray="3 1" stroke-dashoffset="1"/><line x1="1321.5" y1="763" x2="1321.5" y2="789" stroke="#fff" stroke-width="1"/><line x1="1321.5" y1="763" x2="1321.5" y2="789" stroke="#000" stroke-width="1" stroke-dasharray="3 1" stroke-dashoffset="1"/><line x1="1377.5" y1="763" x2="1377.5" y2="789" stroke="#fff" stroke-width="1"/><line x1="1377.5" y1="763" x2="1377.5" y2="789" stroke="#000" stroke-width="1" stroke-dasharray="3 1" stroke-dashoffset="1"/><line x1="1432.5" y1="763" x2="1432.5" y2="789" stroke="#fff" stroke-width="1"/><line x1="1432.5" y1="763" x2="1432.5" y2="789" stroke="#000" stroke-width="1" stroke-dasharray="3 1" stroke-dashoffset="1"/><line x1="1509.5" y1="763" x2="1509.5" y2="789" stroke="#fff" stroke-width="1"/><line x1="1509.5" y1="763" x2="1509.5" y2="789" stroke="#000" stroke-width="1" stroke-dasharray="3 1" stroke-dashoffset="1"/><line x1="26" y1="789.5" x2="1510" y2="789.5" stroke="#fff" stroke-width="1"/><line x1="26" y1="789.5" x2="1510" y2="789.5" stroke="#000" stroke-width="1" stroke-dasharray="3 1" stroke-dashoffset="2"/><line x1="69.5" y1="789" x2="69.5" y2="807" stroke="#fff" stroke-width="1"/><line x1="69.5" y1="789" x2="69.5" y2="807" stroke="#000" stroke-width="1" stroke-dasharray="3 1" stroke-dashoffset="3"/><line x1="166.5" y1="789" x2="166.5" y2="807" stroke="#fff" stroke-width="1"/><line x1="166.5" y1="789" x2="166.5" y2="807" stroke="#000" stroke-width="1" stroke-dasharray="3 1" stroke-dashoffset="3"/><line x1="210.5" y1="789" x2="210.5" y2="807" stroke="#fff" stroke-width="1"/><line x1="210.5" y1="789" x2="210.5" y2="807" stroke="#000" stroke-width="1" stroke-dasharray="3 1" stroke-dashoffset="3"/><line x1="279.5" y1="789" x2="279.5" y2="807" stroke="#fff" stroke-width="1"/><line x1="279.5" y1="789" x2="279.5" y2="807" stroke="#000" stroke-width="1" stroke-dasharray="3 1" stroke-dashoffset="3"/><line x1="343.5" y1="789" x2="343.5" y2="807" stroke="#fff" stroke-width="1"/><line x1="343.5" y1="789" x2="343.5" y2="807" stroke="#000" stroke-width="1" stroke-dasharray="3 1" stroke-dashoffset="3"/><line x1="408.5" y1="789" x2="408.5" y2="807" stroke="#fff" stroke-width="1"/><line x1="408.5" y1="789" x2="408.5" y2="807" stroke="#000" stroke-width="1" stroke-dasharray="3 1" stroke-dashoffset="3"/><line x1="479.5" y1="789" x2="479.5" y2="807" stroke="#fff" stroke-width="1"/><line x1="479.5" y1="789" x2="479.5" y2="807" stroke="#000" stroke-width="1" stroke-dasharray="3 1" stroke-dashoffset="3"/><line x1="546.5" y1="789" x2="546.5" y2="807" stroke="#fff" stroke-width="1"/><line x1="546.5" y1="789" x2="546.5" y2="807" stroke="#000" stroke-width="1" stroke-dasharray="3 1" stroke-dashoffset="3"/><line x1="613.5" y1="789" x2="613.5" y2="807" stroke="#fff" stroke-width="1"/><line x1="613.5" y1="789" x2="613.5" y2="807" stroke="#000" stroke-width="1" stroke-dasharray="3 1" stroke-dashoffset="3"/><line x1="659.5" y1="789" x2="659.5" y2="807" stroke="#fff" stroke-width="1"/><line x1="659.5" y1="789" x2="659.5" y2="807" stroke="#000" stroke-width="1" stroke-dasharray="3 1" stroke-dashoffset="3"/><line x1="728.5" y1="789" x2="728.5" y2="807" stroke="#fff" stroke-width="1"/><line x1="728.5" y1="789" x2="728.5" y2="807" stroke="#000" stroke-width="1" stroke-dasharray="3 1" stroke-dashoffset="3"/><line x1="794.5" y1="789" x2="794.5" y2="807" stroke="#fff" stroke-width="1"/><line x1="794.5" y1="789" x2="794.5" y2="807" stroke="#000" stroke-width="1" stroke-dasharray="3 1" stroke-dashoffset="3"/><line x1="849.5" y1="789" x2="849.5" y2="807" stroke="#fff" stroke-width="1"/><line x1="849.5" y1="789" x2="849.5" y2="807" stroke="#000" stroke-width="1" stroke-dasharray="3 1" stroke-dashoffset="3"/><line x1="904.5" y1="789" x2="904.5" y2="807" stroke="#fff" stroke-width="1"/><line x1="904.5" y1="789" x2="904.5" y2="807" stroke="#000" stroke-width="1" stroke-dasharray="3 1" stroke-dashoffset="3"/><line x1="959.5" y1="789" x2="959.5" y2="807" stroke="#fff" stroke-width="1"/><line x1="959.5" y1="789" x2="959.5" y2="807" stroke="#000" stroke-width="1" stroke-dasharray="3 1" stroke-dashoffset="3"/><line x1="1014.5" y1="789" x2="1014.5" y2="807" stroke="#fff" stroke-width="1"/><line x1="1014.5" y1="789" x2="1014.5" y2="807" stroke="#000" stroke-width="1" stroke-dasharray="3 1" stroke-dashoffset="3"/><line x1="1081.5" y1="789" x2="1081.5" y2="807" stroke="#fff" stroke-width="1"/><line x1="1081.5" y1="789" x2="1081.5" y2="807" stroke="#000" stroke-width="1" stroke-dasharray="3 1" stroke-dashoffset="3"/><line x1="1141.5" y1="789" x2="1141.5" y2="807" stroke="#fff" stroke-width="1"/><line x1="1141.5" y1="789" x2="1141.5" y2="807" stroke="#000" stroke-width="1" stroke-dasharray="3 1" stroke-dashoffset="3"/><line x1="1201.5" y1="789" x2="1201.5" y2="807" stroke="#fff" stroke-width="1"/><line x1="1201.5" y1="789" x2="1201.5" y2="807" stroke="#000" stroke-width="1" stroke-dasharray="3 1" stroke-dashoffset="3"/><line x1="1261.5" y1="789" x2="1261.5" y2="807" stroke="#fff" stroke-width="1"/><line x1="1261.5" y1="789" x2="1261.5" y2="807" stroke="#000" stroke-width="1" stroke-dasharray="3 1" stroke-dashoffset="3"/><line x1="1321.5" y1="789" x2="1321.5" y2="807" stroke="#fff" stroke-width="1"/><line x1="1321.5" y1="789" x2="1321.5" y2="807" stroke="#000" stroke-width="1" stroke-dasharray="3 1" stroke-dashoffset="3"/><line x1="1377.5" y1="789" x2="1377.5" y2="807" stroke="#fff" stroke-width="1"/><line x1="1377.5" y1="789" x2="1377.5" y2="807" stroke="#000" stroke-width="1" stroke-dasharray="3 1" stroke-dashoffset="3"/><line x1="1432.5" y1="789" x2="1432.5" y2="807" stroke="#fff" stroke-width="1"/><line x1="1432.5" y1="789" x2="1432.5" y2="807" stroke="#000" stroke-width="1" stroke-dasharray="3 1" stroke-dashoffset="3"/><line x1="1509.5" y1="789" x2="1509.5" y2="807" stroke="#fff" stroke-width="1"/><line x1="1509.5" y1="789" x2="1509.5" y2="807" stroke="#000" stroke-width="1" stroke-dasharray="3 1" stroke-dashoffset="3"/><line x1="26" y1="815.5" x2="1510" y2="815.5" stroke="#fff" stroke-width="1"/><line x1="26" y1="815.5" x2="1510" y2="815.5" stroke="#000" stroke-width="1" stroke-dasharray="3 1" stroke-dashoffset="2"/></svg><div class="a" style="left:612px;top:276px;width:403px;height:39px;background:#c4d79b;border:2px solid #000"></div><div class="a" style="left:728px;top:334px;width:177px;height:2px;background:#000"></div>
<div class="c cc b" style="left:614px;top:278px;width:400px;height:36px;font-size:28.5px;line-height:30px;padding-top:5px">BẢNG TÍNH LƯƠNG</div><div class="c cc b" style="left:729px;top:315px;width:175px;height:20px;font-size:20.7px;color:#ff0000;line-height:22px;overflow:visible">Tháng 4 năm 2020</div><div class="c cr" style="left:1322px;top:336px;width:187px;height:21px;font-style:italic;font-size:17.8px;padding-right:2px">Đơn vị tính: Việt Nam</div><div class="a" style="left:1353px;top:354px;width:156px;height:1px;background:#000"></div><div class="c cc b" style="left:27px;top:358px;width:42px;height:131px;font-size:12.5px"><span class="sy">STT</span></div><div class="c cc b" style="left:70px;top:358px;width:96px;height:131px;font-size:12.5px"><span class="sy">Họ và tên</span></div><div class="c cc b" style="left:167px;top:358px;width:43px;height:131px;padding-top:0;font-size:12.5px">Chức<br>vụ</div><div class="c cc b" style="left:211px;top:358px;width:68px;height:131px;padding-top:0;font-size:12.5px">Lương<br>Chính</div><div class="c cc b" style="left:547px;top:358px;width:66px;height:131px;padding-top:0;font-size:12.5px">Tổng<br>Thu Nhập</div><div class="c cc b" style="left:614px;top:358px;width:45px;height:131px;padding-top:0;font-size:12.5px">Ngày<br>công</div><div class="c cc b" style="left:660px;top:358px;width:68px;height:131px;padding-top:0;font-size:12.5px">Tổng<br>Lương<br>Thực Tế</div><div class="c cc b" style="left:729px;top:358px;width:65px;height:131px;padding-top:0;font-size:12.5px">Lương<br>đóng BH</div><div class="c cc b" style="left:1322px;top:358px;width:55px;height:131px;padding-top:0;font-size:12.5px">Thuế<br>TNCN</div><div class="c cc b" style="left:1378px;top:358px;width:54px;height:131px;padding-top:0;font-size:12.5px">Tạm<br>ứng</div><div class="c cc b" style="left:1433px;top:358px;width:84px;height:131px;padding-top:0;font-size:12.5px">Thực<br>lĩnh</div><div class="c cc b" style="left:280px;top:358px;width:266px;height:65px;font-size:12.8px"><span class="sy">Phụ cấp</span></div><div class="c cc b" style="left:795px;top:358px;width:286px;height:65px;font-size:12.6px"><span class="sy">Trích vào Chi phí Doanh nghiệp</span></div><div class="c cc b" style="left:1082px;top:358px;width:239px;height:65px;font-size:12.5px"><span class="sy">Trích vào Lương nhân viên</span></div><div class="c cc" style="left:280px;top:424px;width:63px;height:65px;padding-top:0;font-size:13.5px">Trách<br>nhiệm</div><div class="c cc" style="left:344px;top:424px;width:64px;height:65px;font-size:13.5px"><span class="sy">Ăn trưa</span></div><div class="c cc" style="left:409px;top:424px;width:70px;height:65px;font-size:13.5px"><span class="sy">Điện thoại</span></div><div class="c cc" style="left:480px;top:424px;width:66px;height:65px;font-size:13.5px"><span class="sy">Xăng xe</span></div><div class="c cc" style="left:795px;top:424px;width:54px;height:65px;padding-top:0;font-size:13.5px">KPCĐ<br>(2%)</div><div class="c cc" style="left:850px;top:424px;width:54px;height:65px;padding-top:0;font-size:13.5px">BHXH<br>(17,5%)</div><div class="c cc" style="left:905px;top:424px;width:54px;height:65px;padding-top:0;font-size:13.5px">BHYT<br>(3%)</div><div class="c cc" style="left:960px;top:424px;width:54px;height:65px;padding-top:0;font-size:13.5px">BHTN<br>(1%)</div><div class="c cc b" style="left:1015px;top:424px;width:66px;height:65px;padding-top:0;font-size:13.5px">Cộng<br>23,5%</div><div class="c cc" style="left:1082px;top:424px;width:59px;height:65px;padding-top:0;font-size:13.5px">BHXH<br>(8%)</div><div class="c cc" style="left:1142px;top:424px;width:59px;height:65px;padding-top:0;font-size:13.5px">BHYT<br>(1,5%)</div><div class="c cc" style="left:1202px;top:424px;width:59px;height:65px;padding-top:0;font-size:13.5px">BHTN<br>(1%)</div><div class="c cc b" style="left:1262px;top:424px;width:59px;height:65px;padding-top:0;font-size:13.5px">Cộng<br>10,5%</div><div class="c cc" style="left:167px;top:490px;width:43px;height:65px;"><span class="sy">1</span></div><div class="c cc" style="left:211px;top:490px;width:68px;height:65px;"><span class="sy">2</span></div><div class="c cc" style="left:280px;top:490px;width:63px;height:65px;"><span class="sy">3</span></div><div class="c cc" style="left:344px;top:490px;width:64px;height:65px;"><span class="sy">4</span></div><div class="c cc" style="left:409px;top:490px;width:70px;height:65px;"><span class="sy">5</span></div><div class="c cc" style="left:480px;top:490px;width:66px;height:65px;"><span class="sy">6</span></div><div class="c cc" style="left:547px;top:490px;width:66px;height:65px;"><span class="sy">8</span></div><div class="c cc" style="left:614px;top:490px;width:45px;height:65px;"><span class="sy">9</span></div><div class="c cc" style="left:660px;top:490px;width:68px;height:65px;"><span class="sy">10</span></div><div class="c cc" style="left:729px;top:490px;width:65px;height:65px;"><span class="sy">11</span></div><div class="c cc" style="left:795px;top:490px;width:54px;height:65px;"><span class="sy">12</span></div><div class="c cc" style="left:850px;top:490px;width:54px;height:65px;"><span class="sy">13</span></div><div class="c cc" style="left:905px;top:490px;width:54px;height:65px;"><span class="sy">14</span></div><div class="c cc" style="left:960px;top:490px;width:54px;height:65px;"><span class="sy">15</span></div><div class="c cc" style="left:1015px;top:490px;width:66px;height:65px;"><span class="sy">16</span></div><div class="c cc" style="left:1082px;top:490px;width:59px;height:65px;"><span class="sy">17</span></div><div class="c cc" style="left:1142px;top:490px;width:59px;height:65px;"><span class="sy">18</span></div><div class="c cc" style="left:1202px;top:490px;width:59px;height:65px;"><span class="sy">19</span></div><div class="c cc" style="left:1262px;top:490px;width:59px;height:65px;"><span class="sy">20</span></div><div class="c cc" style="left:1322px;top:490px;width:55px;height:65px;"><span class="sy">21</span></div><div class="c cc" style="left:1378px;top:490px;width:54px;height:65px;"><span class="sy">22</span></div><div class="c cc" style="left:1433px;top:490px;width:84px;height:65px;"><span class="sy">23</span></div><div class="c cc b" style="left:27px;top:556px;width:42px;height:25px;"><span class="sy">A</span></div><div class="c cl b" style="left:70px;top:556px;width:150px;height:25px;overflow:visible"><span class="sy" style="transform:scale(1.045,1.1);transform-origin:0 50%">Bộ phận Quản lý</span></div><div class="c cr b" style="left:211px;top:556px;width:68px;height:25px;"><span class="sy">37,000,000</span></div><div class="c cr b" style="left:280px;top:556px;width:63px;height:25px;"><span class="sy">6,000,000</span></div><div class="c cr b" style="left:344px;top:556px;width:64px;height:25px;"><span class="sy">4,380,000</span></div><div class="c cr b" style="left:409px;top:556px;width:70px;height:25px;"><span class="sy">6,800,000</span></div><div class="c cr b" style="left:480px;top:556px;width:66px;height:25px;"><span class="sy">6,800,000</span></div><div class="c cr b" style="left:547px;top:556px;width:66px;height:25px;"><span class="sy">60,980,000</span></div><div class="c cr b" style="left:614px;top:556px;width:45px;height:25px;"><span class="sy">152</span></div><div class="c cr b" style="left:660px;top:556px;width:68px;height:25px;"><span class="sy">59,767,692</span></div><div class="c cr b" style="left:729px;top:556px;width:65px;height:25px;"><span class="sy">43,000,000</span></div><div class="c cr b" style="left:795px;top:556px;width:54px;height:25px;"><span class="sy">860,000</span></div><div class="c cr b" style="left:850px;top:556px;width:54px;height:25px;"><span class="sy">7,525,000</span></div><div class="c cr b" style="left:905px;top:556px;width:54px;height:25px;"><span class="sy">1,290,000</span></div><div class="c cr b" style="left:960px;top:556px;width:54px;height:25px;"><span class="sy">430,000</span></div><div class="c cr b" style="left:1015px;top:556px;width:66px;height:25px;"><span class="sy">10,105,000</span></div><div class="c cr b" style="left:1082px;top:556px;width:59px;height:25px;"><span class="sy">3,440,000</span></div><div class="c cr b" style="left:1142px;top:556px;width:59px;height:25px;"><span class="sy">645,000</span></div><div class="c cr b" style="left:1202px;top:556px;width:59px;height:25px;"><span class="sy">430,000</span></div><div class="c cr b" style="left:1262px;top:556px;width:59px;height:25px;"><span class="sy">4,515,000</span></div><div class="c cr b" style="left:1322px;top:556px;width:55px;height:25px;"><span class="sy">0</span></div><div class="c cr b" style="left:1378px;top:556px;width:54px;height:25px;"><span class="sy">0</span></div><div class="c b" style="left:1433px;top:556px;width:76px;height:25px;font-size:12px"><span class="sy" style="position:absolute;right:-6.5px">55,252,692</span></div><div class="c cc" style="left:27px;top:582px;width:42px;height:25px;"><span class="sy">01</span></div><div class="c cl" style="left:70px;top:582px;width:96px;height:25px;"><span class="sy">Đoàn Công Lập</span></div><div class="c cc" style="left:167px;top:582px;width:43px;height:25px;"><span class="sy">GĐ</span></div><div class="c cr" style="left:211px;top:582px;width:68px;height:25px;"><span class="sy">8,000,000</span></div><div class="c cr" style="left:280px;top:582px;width:63px;height:25px;"><span class="sy">3,000,000</span></div><div class="c cr" style="left:344px;top:582px;width:64px;height:25px;"><span class="sy">730,000</span></div><div class="c cr" style="left:409px;top:582px;width:70px;height:25px;"><span class="sy">2,000,000</span></div><div class="c cr" style="left:480px;top:582px;width:66px;height:25px;"><span class="sy">2,000,000</span></div><div class="c cr" style="left:547px;top:582px;width:66px;height:25px;"><span class="sy">15,730,000</span></div><div class="c cr" style="left:614px;top:582px;width:45px;height:25px;"><span class="sy">26</span></div><div class="c cr b" style="left:660px;top:582px;width:68px;height:25px;"><span class="sy">15,730,000</span></div><div class="c cr b" style="left:729px;top:582px;width:65px;height:25px;"><span class="sy">11,000,000</span></div><div class="c cr" style="left:795px;top:582px;width:54px;height:25px;"><span class="sy">220,000</span></div><div class="c cr" style="left:850px;top:582px;width:54px;height:25px;"><span class="sy">1,925,000</span></div><div class="c cr" style="left:905px;top:582px;width:54px;height:25px;"><span class="sy">330,000</span></div><div class="c cr" style="left:960px;top:582px;width:54px;height:25px;"><span class="sy">110,000</span></div><div class="c cr" style="left:1015px;top:582px;width:66px;height:25px;"><span class="sy">2,585,000</span></div><div class="c cr" style="left:1082px;top:582px;width:59px;height:25px;"><span class="sy">880,000</span></div><div class="c cr" style="left:1142px;top:582px;width:59px;height:25px;"><span class="sy">165,000</span></div><div class="c cr" style="left:1202px;top:582px;width:59px;height:25px;"><span class="sy">110,000</span></div><div class="c cr" style="left:1262px;top:582px;width:59px;height:25px;"><span class="sy">1,155,000</span></div><div class="c b" style="left:1433px;top:582px;width:76px;height:25px;font-size:14px"><span class="sy" style="position:absolute;right:-6px">14,575,000</span></div><div class="c cc" style="left:27px;top:608px;width:42px;height:25px;"><span class="sy">02</span></div><div class="c cl" style="left:70px;top:608px;width:96px;height:25px;"><span class="sy">Nguyễn Linh Tôn</span></div><div class="c cc" style="left:167px;top:608px;width:43px;height:25px;"><span class="sy">P.GD</span></div><div class="c cr" style="left:211px;top:608px;width:68px;height:25px;"><span class="sy">7,000,000</span></div><div class="c cr" style="left:280px;top:608px;width:63px;height:25px;"><span class="sy">2,000,000</span></div><div class="c cr" style="left:344px;top:608px;width:64px;height:25px;"><span class="sy">730,000</span></div><div class="c cr" style="left:409px;top:608px;width:70px;height:25px;"><span class="sy">2,000,000</span></div><div class="c cr" style="left:480px;top:608px;width:66px;height:25px;"><span class="sy">2,000,000</span></div><div class="c cr" style="left:547px;top:608px;width:66px;height:25px;"><span class="sy">13,730,000</span></div><div class="c cr" style="left:614px;top:608px;width:45px;height:25px;"><span class="sy">26</span></div><div class="c cr b" style="left:660px;top:608px;width:68px;height:25px;"><span class="sy">13,730,000</span></div><div class="c cr b" style="left:729px;top:608px;width:65px;height:25px;"><span class="sy">9,000,000</span></div><div class="c cr" style="left:795px;top:608px;width:54px;height:25px;"><span class="sy">180,000</span></div><div class="c cr" style="left:850px;top:608px;width:54px;height:25px;"><span class="sy">1,575,000</span></div><div class="c cr" style="left:905px;top:608px;width:54px;height:25px;"><span class="sy">270,000</span></div><div class="c cr" style="left:960px;top:608px;width:54px;height:25px;"><span class="sy">90,000</span></div><div class="c cr" style="left:1015px;top:608px;width:66px;height:25px;"><span class="sy">2,115,000</span></div><div class="c cr" style="left:1082px;top:608px;width:59px;height:25px;"><span class="sy">720,000</span></div><div class="c cr" style="left:1142px;top:608px;width:59px;height:25px;"><span class="sy">135,000</span></div><div class="c cr" style="left:1202px;top:608px;width:59px;height:25px;"><span class="sy">90,000</span></div><div class="c cr" style="left:1262px;top:608px;width:59px;height:25px;"><span class="sy">945,000</span></div><div class="c b" style="left:1433px;top:608px;width:76px;height:25px;font-size:14px"><span class="sy" style="position:absolute;right:-6px">12,785,000</span></div><div class="c cc" style="left:27px;top:634px;width:42px;height:25px;"><span class="sy">03</span></div><div class="c cl" style="left:70px;top:634px;width:96px;height:25px;"><span class="sy">Đặng Hoài Trâm</span></div><div class="c cc" style="left:167px;top:634px;width:43px;height:25px;"><span class="sy">KTT</span></div><div class="c cr" style="left:211px;top:634px;width:68px;height:25px;"><span class="sy">7,000,000</span></div><div class="c cr" style="left:280px;top:634px;width:63px;height:25px;"><span class="sy">1,000,000</span></div><div class="c cr" style="left:344px;top:634px;width:64px;height:25px;"><span class="sy">730,000</span></div><div class="c cr" style="left:409px;top:634px;width:70px;height:25px;"><span class="sy">2,000,000</span></div><div class="c cr" style="left:480px;top:634px;width:66px;height:25px;"><span class="sy">2,000,000</span></div><div class="c cr" style="left:547px;top:634px;width:66px;height:25px;"><span class="sy">12,730,000</span></div><div class="c cr" style="left:614px;top:634px;width:45px;height:25px;"><span class="sy">25</span></div><div class="c cr b" style="left:660px;top:634px;width:68px;height:25px;"><span class="sy">12,240,385</span></div><div class="c cr b" style="left:729px;top:634px;width:65px;height:25px;"><span class="sy">8,000,000</span></div><div class="c cr" style="left:795px;top:634px;width:54px;height:25px;"><span class="sy">160,000</span></div><div class="c cr" style="left:850px;top:634px;width:54px;height:25px;"><span class="sy">1,400,000</span></div><div class="c cr" style="left:905px;top:634px;width:54px;height:25px;"><span class="sy">240,000</span></div><div class="c cr" style="left:960px;top:634px;width:54px;height:25px;"><span class="sy">80,000</span></div><div class="c cr" style="left:1015px;top:634px;width:66px;height:25px;"><span class="sy">1,880,000</span></div><div class="c cr" style="left:1082px;top:634px;width:59px;height:25px;"><span class="sy">640,000</span></div><div class="c cr" style="left:1142px;top:634px;width:59px;height:25px;"><span class="sy">120,000</span></div><div class="c cr" style="left:1202px;top:634px;width:59px;height:25px;"><span class="sy">80,000</span></div><div class="c cr" style="left:1262px;top:634px;width:59px;height:25px;"><span class="sy">840,000</span></div><div class="c b" style="left:1433px;top:634px;width:76px;height:25px;font-size:14px"><span class="sy" style="position:absolute;right:-6px">11,400,385</span></div><div class="c cc" style="left:27px;top:660px;width:42px;height:25px;"><span class="sy">04</span></div><div class="c cl" style="left:70px;top:660px;width:96px;height:25px;"><span class="sy">Đinh Tùng Lâm</span></div><div class="c cc" style="left:167px;top:660px;width:43px;height:25px;"><span class="sy">KTV</span></div><div class="c cr" style="left:211px;top:660px;width:68px;height:25px;"><span class="sy">5,000,000</span></div><div class="c cr" style="left:344px;top:660px;width:64px;height:25px;"><span class="sy">730,000</span></div><div class="c cr" style="left:409px;top:660px;width:70px;height:25px;"><span class="sy">400,000</span></div><div class="c cr" style="left:480px;top:660px;width:66px;height:25px;"><span class="sy">400,000</span></div><div class="c cr" style="left:547px;top:660px;width:66px;height:25px;"><span class="sy">6,530,000</span></div><div class="c cr" style="left:614px;top:660px;width:45px;height:25px;"><span class="sy">26</span></div><div class="c cr b" style="left:660px;top:660px;width:68px;height:25px;"><span class="sy">6,530,000</span></div><div class="c cr b" style="left:729px;top:660px;width:65px;height:25px;"><span class="sy">5,000,000</span></div><div class="c cr" style="left:795px;top:660px;width:54px;height:25px;"><span class="sy">100,000</span></div><div class="c cr" style="left:850px;top:660px;width:54px;height:25px;"><span class="sy">875,000</span></div><div class="c cr" style="left:905px;top:660px;width:54px;height:25px;"><span class="sy">150,000</span></div><div class="c cr" style="left:960px;top:660px;width:54px;height:25px;"><span class="sy">50,000</span></div><div class="c cr" style="left:1015px;top:660px;width:66px;height:25px;"><span class="sy">1,175,000</span></div><div class="c cr" style="left:1082px;top:660px;width:59px;height:25px;"><span class="sy">400,000</span></div><div class="c cr" style="left:1142px;top:660px;width:59px;height:25px;"><span class="sy">75,000</span></div><div class="c cr" style="left:1202px;top:660px;width:59px;height:25px;"><span class="sy">50,000</span></div><div class="c cr" style="left:1262px;top:660px;width:59px;height:25px;"><span class="sy">525,000</span></div><div class="c b" style="left:1433px;top:660px;width:76px;height:25px;font-size:14px"><span class="sy" style="position:absolute;right:-6px">6,005,000</span></div><div class="c cc" style="left:27px;top:686px;width:42px;height:25px;"><span class="sy">06</span></div><div class="c cl" style="left:70px;top:686px;width:96px;height:25px;"><span class="sy">Trần Văn Tuấn</span></div><div class="c cc" style="left:167px;top:686px;width:43px;height:25px;"><span class="sy">KT</span></div><div class="c cr" style="left:211px;top:686px;width:68px;height:25px;"><span class="sy">5,000,000</span></div><div class="c cr" style="left:344px;top:686px;width:64px;height:25px;"><span class="sy">730,000</span></div><div class="c cr" style="left:409px;top:686px;width:70px;height:25px;"><span class="sy">400,000</span></div><div class="c cr" style="left:480px;top:686px;width:66px;height:25px;"><span class="sy">400,000</span></div><div class="c cr" style="left:547px;top:686px;width:66px;height:25px;"><span class="sy">6,530,000</span></div><div class="c cr" style="left:614px;top:686px;width:45px;height:25px;"><span class="sy">24</span></div><div class="c cr b" style="left:660px;top:686px;width:68px;height:25px;"><span class="sy">6,027,692</span></div><div class="c cr b" style="left:729px;top:686px;width:65px;height:25px;"><span class="sy">5,000,000</span></div><div class="c cr" style="left:795px;top:686px;width:54px;height:25px;"><span class="sy">100,000</span></div><div class="c cr" style="left:850px;top:686px;width:54px;height:25px;"><span class="sy">875,000</span></div><div class="c cr" style="left:905px;top:686px;width:54px;height:25px;"><span class="sy">150,000</span></div><div class="c cr" style="left:960px;top:686px;width:54px;height:25px;"><span class="sy">50,000</span></div><div class="c cr" style="left:1015px;top:686px;width:66px;height:25px;"><span class="sy">1,175,000</span></div><div class="c cr" style="left:1082px;top:686px;width:59px;height:25px;"><span class="sy">400,000</span></div><div class="c cr" style="left:1142px;top:686px;width:59px;height:25px;"><span class="sy">75,000</span></div><div class="c cr" style="left:1202px;top:686px;width:59px;height:25px;"><span class="sy">50,000</span></div><div class="c cr" style="left:1262px;top:686px;width:59px;height:25px;"><span class="sy">525,000</span></div><div class="c b" style="left:1433px;top:686px;width:76px;height:25px;font-size:14px"><span class="sy" style="position:absolute;right:-6px">5,502,692</span></div><div class="c cc" style="left:27px;top:712px;width:42px;height:25px;"><span class="sy">05</span></div><div class="c cl" style="left:70px;top:712px;width:96px;height:25px;"><span class="sy">Lê Thị Thuỷ</span></div><div class="c cc" style="left:167px;top:712px;width:43px;height:25px;"><span class="sy">NVVP</span></div><div class="c cr" style="left:211px;top:712px;width:68px;height:25px;"><span class="sy">5,000,000</span></div><div class="c cr" style="left:344px;top:712px;width:64px;height:25px;"><span class="sy">730,000</span></div><div class="c cr" style="left:547px;top:712px;width:66px;height:25px;"><span class="sy">5,730,000</span></div><div class="c cr" style="left:614px;top:712px;width:45px;height:25px;"><span class="sy">25</span></div><div class="c cr b" style="left:660px;top:712px;width:68px;height:25px;"><span class="sy">5,509,615</span></div><div class="c cr b" style="left:729px;top:712px;width:65px;height:25px;"><span class="sy">5,000,000</span></div><div class="c cr" style="left:795px;top:712px;width:54px;height:25px;"><span class="sy">100,000</span></div><div class="c cr" style="left:850px;top:712px;width:54px;height:25px;"><span class="sy">875,000</span></div><div class="c cr" style="left:905px;top:712px;width:54px;height:25px;"><span class="sy">150,000</span></div><div class="c cr" style="left:960px;top:712px;width:54px;height:25px;"><span class="sy">50,000</span></div><div class="c cr" style="left:1015px;top:712px;width:66px;height:25px;"><span class="sy">1,175,000</span></div><div class="c cr" style="left:1082px;top:712px;width:59px;height:25px;"><span class="sy">400,000</span></div><div class="c cr" style="left:1142px;top:712px;width:59px;height:25px;"><span class="sy">75,000</span></div><div class="c cr" style="left:1202px;top:712px;width:59px;height:25px;"><span class="sy">50,000</span></div><div class="c cr" style="left:1262px;top:712px;width:59px;height:25px;"><span class="sy">525,000</span></div><div class="c b" style="left:1433px;top:712px;width:76px;height:25px;font-size:14px"><span class="sy" style="position:absolute;right:-6px">4,984,615</span></div><div class="c cc b" style="left:27px;top:764px;width:42px;height:25px;"><span class="sy">B</span></div><div class="c cl b" style="left:70px;top:764px;width:150px;height:25px;overflow:visible"><span class="sy" style="transform:scale(1.045,1.1);transform-origin:0 50%">Bộ phận Bán hàng</span></div><div class="c cr b" style="left:211px;top:764px;width:68px;height:25px;"><span class="sy">12,000,000</span></div><div class="c cr b" style="left:280px;top:764px;width:63px;height:25px;"><span class="sy">1,000,000</span></div><div class="c cr b" style="left:344px;top:764px;width:64px;height:25px;"><span class="sy">1,460,000</span></div><div class="c cr b" style="left:409px;top:764px;width:70px;height:25px;"><span class="sy">2,500,000</span></div><div class="c cr b" style="left:480px;top:764px;width:66px;height:25px;"><span class="sy">2,500,000</span></div><div class="c cr b" style="left:547px;top:764px;width:66px;height:25px;"><span class="sy">19,460,000</span></div><div class="c cr b" style="left:614px;top:764px;width:45px;height:25px;"><span class="sy">39</span></div><div class="c cr b" style="left:660px;top:764px;width:68px;height:25px;"><span class="sy">14,710,385</span></div><div class="c cr b" style="left:729px;top:764px;width:65px;height:25px;"><span class="sy">13,000,000</span></div><div class="c cr b" style="left:795px;top:764px;width:54px;height:25px;"><span class="sy">260,000</span></div><div class="c cr b" style="left:850px;top:764px;width:54px;height:25px;"><span class="sy">2,275,000</span></div><div class="c cr b" style="left:905px;top:764px;width:54px;height:25px;"><span class="sy">390,000</span></div><div class="c cr b" style="left:960px;top:764px;width:54px;height:25px;"><span class="sy">130,000</span></div><div class="c cr b" style="left:1015px;top:764px;width:66px;height:25px;"><span class="sy">3,055,000</span></div><div class="c cr b" style="left:1082px;top:764px;width:59px;height:25px;"><span class="sy">1,040,000</span></div><div class="c cr b" style="left:1142px;top:764px;width:59px;height:25px;"><span class="sy">195,000</span></div><div class="c cr b" style="left:1202px;top:764px;width:59px;height:25px;"><span class="sy">130,000</span></div><div class="c cr b" style="left:1262px;top:764px;width:59px;height:25px;"><span class="sy">1,365,000</span></div><div class="c cr b" style="left:1322px;top:764px;width:55px;height:25px;"><span class="sy">0</span></div><div class="c cr b" style="left:1378px;top:764px;width:54px;height:25px;"><span class="sy">0</span></div><div class="c b" style="left:1433px;top:764px;width:76px;height:25px;font-size:12px"><span class="sy" style="position:absolute;right:-6.5px">13,345,385</span></div><div class="c cc" style="left:27px;top:790px;width:42px;height:25px;"><span class="sy">07</span></div><div class="c cl" style="left:70px;top:790px;width:96px;height:25px;"><span class="sy">Lã Tuấn Kiệt</span></div><div class="c cc" style="left:167px;top:790px;width:43px;height:25px;"><span class="sy">TPKD</span></div><div class="c cr" style="left:211px;top:790px;width:68px;height:25px;"><span class="sy">7,000,000</span></div><div class="c cr" style="left:280px;top:790px;width:63px;height:25px;"><span class="sy">1,000,000</span></div><div class="c cr" style="left:344px;top:790px;width:64px;height:25px;"><span class="sy">730,000</span></div><div class="c cr" style="left:409px;top:790px;width:70px;height:25px;"><span class="sy">2,000,000</span></div><div class="c cr" style="left:480px;top:790px;width:66px;height:25px;"><span class="sy">2,000,000</span></div><div class="c cr" style="left:547px;top:790px;width:66px;height:25px;"><span class="sy">12,730,000</span></div><div class="c cr" style="left:614px;top:790px;width:45px;height:25px;"><span class="sy">20</span></div><div class="c cr b" style="left:660px;top:790px;width:68px;height:25px;"><span class="sy">9,792,308</span></div><div class="c cr b" style="left:729px;top:790px;width:65px;height:25px;"><span class="sy">8,000,000</span></div><div class="c cr" style="left:795px;top:790px;width:54px;height:25px;"><span class="sy">160,000</span></div><div class="c cr" style="left:850px;top:790px;width:54px;height:25px;"><span class="sy">1,400,000</span></div><div class="c cr" style="left:905px;top:790px;width:54px;height:25px;"><span class="sy">240,000</span></div><div class="c cr" style="left:960px;top:790px;width:54px;height:25px;"><span class="sy">80,000</span></div><div class="c cr" style="left:1015px;top:790px;width:66px;height:25px;"><span class="sy">1,880,000</span></div><div class="c cr" style="left:1082px;top:790px;width:59px;height:25px;"><span class="sy">640,000</span></div><div class="c cr" style="left:1142px;top:790px;width:59px;height:25px;"><span class="sy">120,000</span></div><div class="c cr" style="left:1202px;top:790px;width:59px;height:25px;"><span class="sy">80,000</span></div><div class="c cr" style="left:1262px;top:790px;width:59px;height:25px;"><span class="sy">840,000</span></div><div class="c b" style="left:1433px;top:790px;width:76px;height:25px;font-size:14px"><span class="sy" style="position:absolute;right:-6px">8,952,308</span></div>
</div></div>
<div class="a" style="left:1px;top:186px;width:1509px;height:26px;background:#fff"></div><svg class="a" style="left:0;top:190px" width="26" height="22"><polygon points="23,7 23,19 11,19" fill="#dadada"/></svg><div class="a ui" style="left:27px;top:193px;width:42px;height:19px;line-height:21px;text-align:center;font-size:12.5px;color:#444;font-weight:normal">A</div><div class="a" style="left:69px;top:193px;width:1px;height:19px;background:#d4d4d4"></div><div class="a ui" style="left:70px;top:193px;width:96px;height:19px;line-height:21px;text-align:center;font-size:12.5px;color:#444;font-weight:normal">B</div><div class="a" style="left:166px;top:193px;width:1px;height:19px;background:#d4d4d4"></div><div class="a ui" style="left:167px;top:193px;width:43px;height:19px;line-height:21px;text-align:center;font-size:12.5px;color:#444;font-weight:normal">C</div><div class="a" style="left:210px;top:193px;width:1px;height:19px;background:#d4d4d4"></div><div class="a ui" style="left:211px;top:193px;width:68px;height:19px;line-height:21px;text-align:center;font-size:12.5px;color:#444;font-weight:normal">D</div><div class="a" style="left:279px;top:193px;width:1px;height:19px;background:#d4d4d4"></div><div class="a ui" style="left:280px;top:193px;width:63px;height:19px;line-height:21px;text-align:center;font-size:12.5px;color:#444;font-weight:normal">E</div><div class="a" style="left:343px;top:193px;width:1px;height:19px;background:#d4d4d4"></div><div class="a ui" style="left:344px;top:193px;width:64px;height:19px;line-height:21px;text-align:center;font-size:12.5px;color:#444;font-weight:normal">F</div><div class="a" style="left:408px;top:193px;width:1px;height:19px;background:#d4d4d4"></div><div class="a ui" style="left:409px;top:193px;width:70px;height:19px;line-height:21px;text-align:center;font-size:12.5px;color:#444;font-weight:normal">G</div><div class="a" style="left:479px;top:193px;width:1px;height:19px;background:#d4d4d4"></div><div class="a ui" style="left:480px;top:193px;width:66px;height:19px;line-height:21px;text-align:center;font-size:12.5px;color:#444;font-weight:normal">H</div><div class="a" style="left:546px;top:193px;width:1px;height:19px;background:#d4d4d4"></div><div class="a ui" style="left:547px;top:193px;width:66px;height:19px;line-height:21px;text-align:center;font-size:12.5px;color:#444;font-weight:normal">I</div><div class="a" style="left:613px;top:193px;width:1px;height:19px;background:#d4d4d4"></div><div class="a ui" style="left:614px;top:193px;width:45px;height:19px;line-height:21px;text-align:center;font-size:12.5px;color:#444;font-weight:normal">J</div><div class="a" style="left:659px;top:193px;width:1px;height:19px;background:#d4d4d4"></div><div class="a ui" style="left:660px;top:193px;width:68px;height:19px;line-height:21px;text-align:center;font-size:12.5px;color:#444;font-weight:normal">K</div><div class="a" style="left:728px;top:193px;width:1px;height:19px;background:#d4d4d4"></div><div class="a ui" style="left:729px;top:193px;width:65px;height:19px;line-height:21px;text-align:center;font-size:12.5px;color:#444;font-weight:normal">L</div><div class="a" style="left:794px;top:193px;width:1px;height:19px;background:#d4d4d4"></div><div class="a" style="left:795px;top:193px;width:54px;height:19px;background:#e1e1e1"></div><div class="a" style="left:794px;top:211px;width:56px;height:2px;background:#217346"></div><div class="a ui" style="left:795px;top:193px;width:54px;height:19px;line-height:21px;text-align:center;font-size:12.5px;color:#217346;font-weight:bold">M</div><div class="a" style="left:849px;top:193px;width:1px;height:19px;background:#d4d4d4"></div><div class="a ui" style="left:850px;top:193px;width:54px;height:19px;line-height:21px;text-align:center;font-size:12.5px;color:#444;font-weight:normal">N</div><div class="a" style="left:904px;top:193px;width:1px;height:19px;background:#d4d4d4"></div><div class="a ui" style="left:905px;top:193px;width:54px;height:19px;line-height:21px;text-align:center;font-size:12.5px;color:#444;font-weight:normal">O</div><div class="a" style="left:959px;top:193px;width:1px;height:19px;background:#d4d4d4"></div><div class="a ui" style="left:960px;top:193px;width:54px;height:19px;line-height:21px;text-align:center;font-size:12.5px;color:#444;font-weight:normal">P</div><div class="a" style="left:1014px;top:193px;width:1px;height:19px;background:#d4d4d4"></div><div class="a ui" style="left:1015px;top:193px;width:66px;height:19px;line-height:21px;text-align:center;font-size:12.5px;color:#444;font-weight:normal">Q</div><div class="a" style="left:1081px;top:193px;width:1px;height:19px;background:#d4d4d4"></div><div class="a ui" style="left:1082px;top:193px;width:59px;height:19px;line-height:21px;text-align:center;font-size:12.5px;color:#444;font-weight:normal">R</div><div class="a" style="left:1141px;top:193px;width:1px;height:19px;background:#d4d4d4"></div><div class="a ui" style="left:1142px;top:193px;width:59px;height:19px;line-height:21px;text-align:center;font-size:12.5px;color:#444;font-weight:normal">S</div><div class="a" style="left:1201px;top:193px;width:1px;height:19px;background:#d4d4d4"></div><div class="a ui" style="left:1202px;top:193px;width:59px;height:19px;line-height:21px;text-align:center;font-size:12.5px;color:#444;font-weight:normal">T</div><div class="a" style="left:1261px;top:193px;width:1px;height:19px;background:#d4d4d4"></div><div class="a ui" style="left:1262px;top:193px;width:59px;height:19px;line-height:21px;text-align:center;font-size:12.5px;color:#444;font-weight:normal">U</div><div class="a" style="left:1321px;top:193px;width:1px;height:19px;background:#d4d4d4"></div><div class="a ui" style="left:1322px;top:193px;width:55px;height:19px;line-height:21px;text-align:center;font-size:12.5px;color:#444;font-weight:normal">V</div><div class="a" style="left:1377px;top:193px;width:1px;height:19px;background:#d4d4d4"></div><div class="a ui" style="left:1378px;top:193px;width:54px;height:19px;line-height:21px;text-align:center;font-size:12.5px;color:#444;font-weight:normal">W</div><div class="a" style="left:1432px;top:193px;width:1px;height:19px;background:#d4d4d4"></div><div class="a ui" style="left:1433px;top:193px;width:76px;height:19px;line-height:21px;text-align:center;font-size:12.5px;color:#444;font-weight:normal">X</div><div class="a" style="left:0;top:212px;width:25px;height:595px;overflow:hidden"><div class="a ui" style="left:1px;top:2px;width:24px;height:21px;display:flex;align-items:flex-end;justify-content:center;font-size:12.5px;line-height:18px;color:#444;font-weight:normal">4</div></div><div class="a" style="left:1px;top:234px;width:25px;height:1px;background:#d4d4d4"></div><div class="a" style="left:0;top:212px;width:25px;height:595px;overflow:hidden"><div class="a ui" style="left:1px;top:24px;width:24px;height:20px;display:flex;align-items:flex-end;justify-content:center;font-size:12.5px;line-height:18px;color:#444;font-weight:normal">5</div></div><div class="a" style="left:1px;top:255px;width:25px;height:1px;background:#d4d4d4"></div><div class="a" style="left:0;top:212px;width:25px;height:595px;overflow:hidden"><div class="a ui" style="left:1px;top:45px;width:24px;height:21px;display:flex;align-items:flex-end;justify-content:center;font-size:12.5px;line-height:18px;color:#444;font-weight:normal">6</div></div><div class="a" style="left:1px;top:277px;width:25px;height:1px;background:#d4d4d4"></div><div class="a" style="left:0;top:212px;width:25px;height:595px;overflow:hidden"><div class="a ui" style="left:1px;top:67px;width:24px;height:36px;display:flex;align-items:flex-end;justify-content:center;font-size:12.5px;line-height:18px;color:#444;font-weight:normal">7</div></div><div class="a" style="left:1px;top:314px;width:25px;height:1px;background:#d4d4d4"></div><div class="a" style="left:0;top:212px;width:25px;height:595px;overflow:hidden"><div class="a ui" style="left:1px;top:104px;width:24px;height:20px;display:flex;align-items:flex-end;justify-content:center;font-size:12.5px;line-height:18px;color:#444;font-weight:normal">8</div></div><div class="a" style="left:1px;top:335px;width:25px;height:1px;background:#d4d4d4"></div><div class="a" style="left:0;top:212px;width:25px;height:595px;overflow:hidden"><div class="a ui" style="left:1px;top:125px;width:24px;height:21px;display:flex;align-items:flex-end;justify-content:center;font-size:12.5px;line-height:18px;color:#444;font-weight:normal">9</div></div><div class="a" style="left:1px;top:357px;width:25px;height:1px;background:#d4d4d4"></div><div class="a" style="left:0;top:212px;width:25px;height:595px;overflow:hidden"><div class="a ui" style="left:1px;top:147px;width:24px;height:65px;display:flex;align-items:flex-end;justify-content:center;font-size:12.5px;line-height:18px;color:#444;font-weight:normal">10</div></div><div class="a" style="left:1px;top:423px;width:25px;height:1px;background:#d4d4d4"></div><div class="a" style="left:0;top:212px;width:25px;height:595px;overflow:hidden"><div class="a ui" style="left:1px;top:213px;width:24px;height:65px;display:flex;align-items:flex-end;justify-content:center;font-size:12.5px;line-height:18px;color:#444;font-weight:normal">11</div></div><div class="a" style="left:1px;top:489px;width:25px;height:1px;background:#d4d4d4"></div><div class="a" style="left:0;top:212px;width:25px;height:595px;overflow:hidden"><div class="a ui" style="left:1px;top:279px;width:24px;height:65px;display:flex;align-items:flex-end;justify-content:center;font-size:12.5px;line-height:18px;color:#444;font-weight:normal">12</div></div><div class="a" style="left:1px;top:555px;width:25px;height:1px;background:#d4d4d4"></div><div class="a" style="left:0;top:212px;width:25px;height:595px;overflow:hidden"><div class="a ui" style="left:1px;top:345px;width:24px;height:25px;display:flex;align-items:flex-end;justify-content:center;font-size:12.5px;line-height:18px;color:#444;font-weight:normal">13</div></div><div class="a" style="left:1px;top:581px;width:25px;height:1px;background:#d4d4d4"></div><div class="a" style="left:0;top:212px;width:25px;height:595px;overflow:hidden"><div class="a ui" style="left:1px;top:371px;width:24px;height:25px;display:flex;align-items:flex-end;justify-content:center;font-size:12.5px;line-height:18px;color:#444;font-weight:normal">14</div></div><div class="a" style="left:1px;top:607px;width:25px;height:1px;background:#d4d4d4"></div><div class="a" style="left:0;top:212px;width:25px;height:595px;overflow:hidden"><div class="a ui" style="left:1px;top:397px;width:24px;height:25px;display:flex;align-items:flex-end;justify-content:center;font-size:12.5px;line-height:18px;color:#444;font-weight:normal">15</div></div><div class="a" style="left:1px;top:633px;width:25px;height:1px;background:#d4d4d4"></div><div class="a" style="left:0;top:212px;width:25px;height:595px;overflow:hidden"><div class="a ui" style="left:1px;top:423px;width:24px;height:25px;display:flex;align-items:flex-end;justify-content:center;font-size:12.5px;line-height:18px;color:#444;font-weight:normal">16</div></div><div class="a" style="left:1px;top:659px;width:25px;height:1px;background:#d4d4d4"></div><div class="a" style="left:0;top:212px;width:25px;height:595px;overflow:hidden"><div class="a ui" style="left:1px;top:449px;width:24px;height:25px;display:flex;align-items:flex-end;justify-content:center;font-size:12.5px;line-height:18px;color:#444;font-weight:normal">17</div></div><div class="a" style="left:1px;top:685px;width:25px;height:1px;background:#d4d4d4"></div><div class="a" style="left:1px;top:686px;width:25px;height:25px;background:#e1e1e1"></div><div class="a" style="left:25px;top:685px;width:2px;height:27px;background:#217346"></div><div class="a" style="left:0;top:212px;width:25px;height:595px;overflow:hidden"><div class="a ui" style="left:1px;top:475px;width:24px;height:25px;display:flex;align-items:flex-end;justify-content:center;font-size:12.5px;line-height:18px;color:#217346;font-weight:bold">18</div></div><div class="a" style="left:1px;top:711px;width:25px;height:1px;background:#d4d4d4"></div><div class="a" style="left:0;top:212px;width:25px;height:595px;overflow:hidden"><div class="a ui" style="left:1px;top:501px;width:24px;height:25px;display:flex;align-items:flex-end;justify-content:center;font-size:12.5px;line-height:18px;color:#444;font-weight:normal">19</div></div><div class="a" style="left:1px;top:737px;width:25px;height:1px;background:#d4d4d4"></div><div class="a" style="left:0;top:212px;width:25px;height:595px;overflow:hidden"><div class="a ui" style="left:1px;top:527px;width:24px;height:25px;display:flex;align-items:flex-end;justify-content:center;font-size:12.5px;line-height:18px;color:#444;font-weight:normal">20</div></div><div class="a" style="left:1px;top:763px;width:25px;height:1px;background:#d4d4d4"></div><div class="a" style="left:0;top:212px;width:25px;height:595px;overflow:hidden"><div class="a ui" style="left:1px;top:553px;width:24px;height:25px;display:flex;align-items:flex-end;justify-content:center;font-size:12.5px;line-height:18px;color:#444;font-weight:normal">21</div></div><div class="a" style="left:1px;top:789px;width:25px;height:1px;background:#d4d4d4"></div><div class="a" style="left:0;top:212px;width:25px;height:595px;overflow:hidden"><div class="a ui" style="left:1px;top:579px;width:24px;height:25px;display:flex;align-items:flex-end;justify-content:center;font-size:12.5px;line-height:18px;color:#444;font-weight:normal">22</div></div><div class="a" style="left:2px;top:212px;width:24px;height:1px;background:#d4d4d4"></div><div class="a" style="left:1509px;top:212px;width:1px;height:595px;background:#ababab"></div><div class="a" style="left:26px;top:193px;width:1px;height:19px;background:#d4d4d4"></div><div class="a" style="left:793px;top:684px;width:58px;height:29px;border:2px solid #217346"></div><div class="a" style="left:795px;top:686px;width:54px;height:25px;border:1px solid #fff"></div><div class="a" style="left:846px;top:708px;width:7px;height:7px;background:#fff"></div><div class="a" style="left:847px;top:709px;width:6px;height:6px;background:#217346"></div>
</body></html>
